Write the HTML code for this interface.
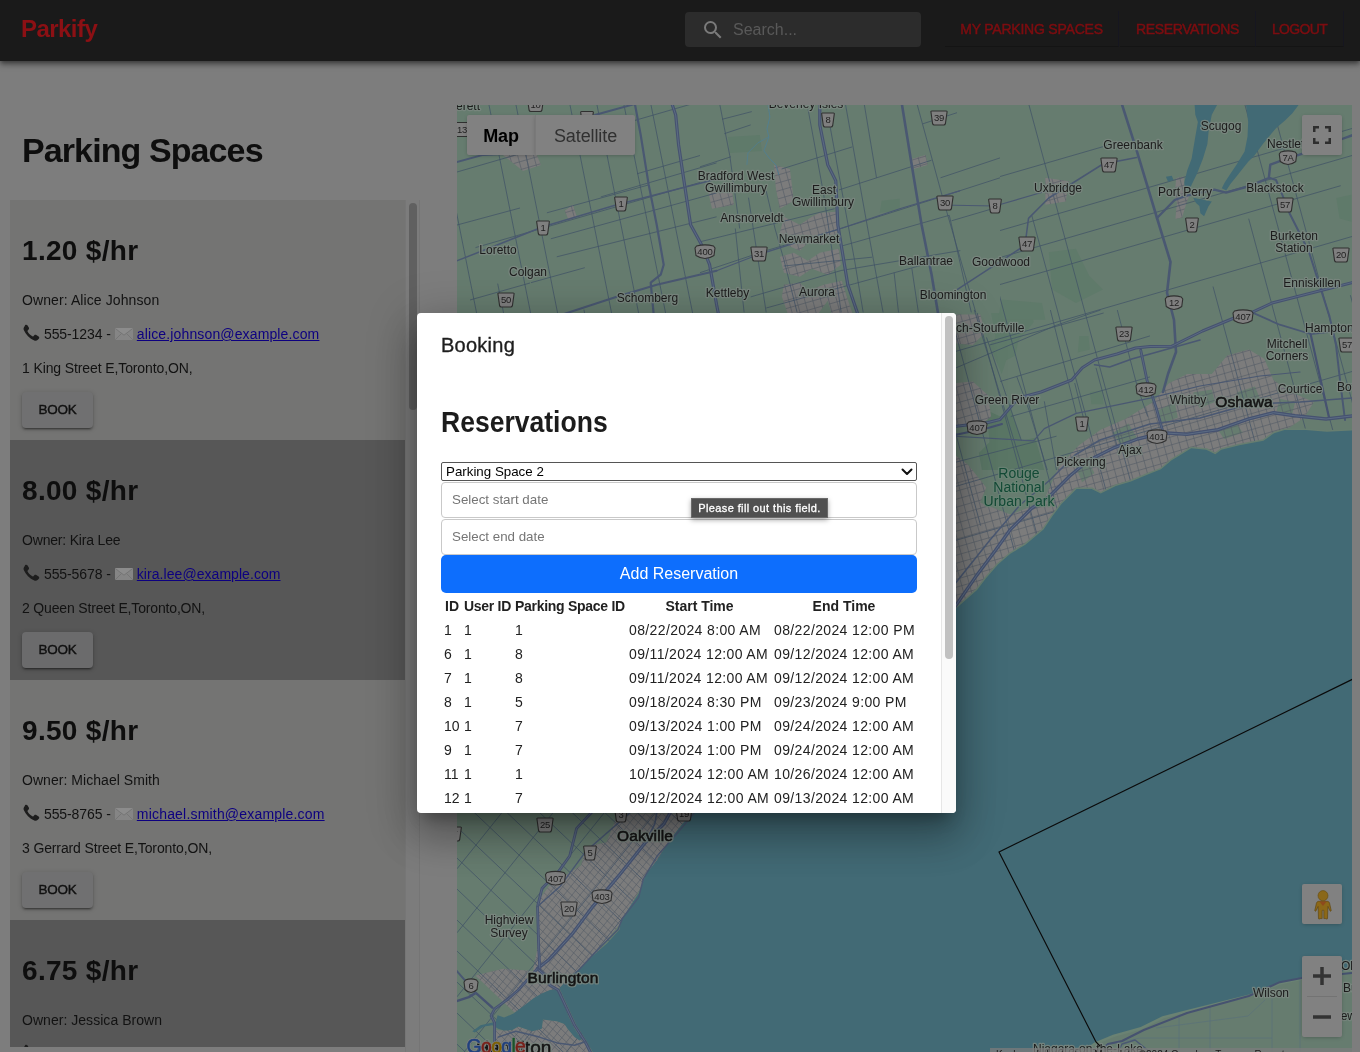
<!DOCTYPE html>
<html lang="en">
<head>
<meta charset="utf-8">
<title>Parkify</title>
<style>
*{box-sizing:border-box}
html,body{margin:0;padding:0}
body{width:1360px;height:1052px;overflow:hidden;position:relative;background:#7d7d7d;font-family:"Liberation Sans",sans-serif;color:#0f0f0f}
#wrap{position:absolute;left:0;top:0;width:1360px;height:1052px;will-change:transform;overflow:hidden}
/* ---------- header ---------- */
#hdr{position:absolute;left:0;top:0;width:1360px;height:61px;background:#1a1a1a;box-shadow:0 2px 4px -1px rgba(0,0,0,.35),0 4px 5px 0 rgba(0,0,0,.25),0 1px 10px 0 rgba(0,0,0,.2);z-index:5}
#logo{position:absolute;left:21px;top:15px;font-size:24px;line-height:28px;font-weight:bold;color:#8c1014;letter-spacing:-.55px}
#search{position:absolute;left:685px;top:12px;width:236px;height:35px;border-radius:4px;background:#2c2c2c}
#search span{position:absolute;left:48px;top:8px;font-size:16px;line-height:20px;color:#595959}
#search svg{position:absolute;left:16px;top:5.500px}
.nav{position:absolute;top:11px;height:36px;font-size:14px;font-weight:normal;-webkit-text-stroke:.45px #7d0d10;color:#7d0d10;line-height:36px;text-align:center;border-bottom:1px solid #141414;border-right:1px solid #161620}
/* ---------- left list ---------- */
#title{position:absolute;left:22px;top:130px;font-size:34px;line-height:40px;font-weight:bold;color:#0e0e0e;letter-spacing:-.9px;white-space:nowrap}
.card{position:absolute;left:10px;width:395px;height:240px}
.card.a{background:#747473}
.card.b{background:#575757}
.card h2{position:absolute;left:12px;top:35px;margin:0;font-size:28px;line-height:32px;font-weight:bold;color:#0e0e0e;letter-spacing:0;white-space:nowrap}
.card p{position:absolute;left:12px;margin:0;font-size:14px;line-height:18px;color:#121212;white-space:nowrap;letter-spacing:0}
.card .o{top:91px}
.card .c{top:125px}
.card .ad{top:159px}
.card a{color:#0d0080;text-decoration:underline}
.card .bk{position:absolute;left:12px;top:192px;width:71px;height:36px;border-radius:4px;font-size:13.500px;font-weight:normal;letter-spacing:-.2px;line-height:36px;text-align:center;color:#111;-webkit-text-stroke:.4px #111;box-shadow:0 3px 1px -2px rgba(0,0,0,.25),0 2px 2px 0 rgba(0,0,0,.2),0 1px 5px 0 rgba(0,0,0,.18)}
.card.a .bk{background:#707071}
.card.b .bk{background:#6b6b6c}
#sbtrack{position:absolute;left:405px;top:200px;width:15px;height:852px;background:#7c7c7c;border-left:1px solid #767676;border-right:1px solid #757575}
#sbthumb{position:absolute;left:409px;top:203px;width:8px;height:207px;border-radius:4px;background:#606060}
#list{position:absolute;left:0;top:200px;width:420px;height:847px;overflow:hidden}
#list .card{left:10px}
.card .ph{position:absolute;left:0;top:-1px}
.card .t1{margin-left:22px;letter-spacing:-.1px}
.card .ml{display:inline-block;vertical-align:-1px;margin-left:.3px;margin-right:4px}
/* ---------- map ---------- */
#map{position:absolute;left:457px;top:105px;width:895px;height:947px;overflow:hidden;background:#667c6f}
.gc{position:absolute;background:#818181;box-shadow:0 1px 4px -1px rgba(0,0,0,.3)}
#glogo{position:absolute;left:9.500px;top:929px;font-size:19.500px;line-height:24px;letter-spacing:-.7px;white-space:nowrap;-webkit-text-stroke:2.200px #7c7f7e;paint-order:stroke fill}
#glogo2{position:absolute;left:9.500px;top:929px;font-size:19.500px;line-height:24px;letter-spacing:-.7px;white-space:nowrap;-webkit-text-stroke:.5px currentColor}
#attr{position:absolute;left:533px;top:943px;height:14px;width:362px;background:rgba(124,124,124,.75);font-size:10px;line-height:14px;color:#1a1a1a;white-space:nowrap}
#attr span{display:inline-block;padding:0 6px}
/* ---------- modal ---------- */
#modal{position:absolute;left:417px;top:313px;width:539px;height:500px;border-radius:4px;background:#fff;box-shadow:0 11px 15px -7px rgba(0,0,0,.3),0 24px 38px 3px rgba(0,0,0,.2),0 9px 46px 8px rgba(0,0,0,.18);z-index:10;overflow:hidden;color:#212121}
#mtitle{position:absolute;left:24px;top:18px;font-size:20px;line-height:28px;color:#1e1e1e;letter-spacing:.25px;-webkit-text-stroke:.35px #1e1e1e;white-space:nowrap}
#mh{position:absolute;left:24px;top:91px;font-size:29px;line-height:36px;font-weight:bold;color:#1c1c1c;white-space:nowrap;transform-origin:0 50%;transform:scaleX(.915)}
#sel{position:absolute;left:24px;top:149px;width:476px;height:19px;border:1px solid #555;border-radius:2px;background:#fff;font-size:13.333px;line-height:17px;color:#000}
#sel span{position:absolute;left:4px;top:0}
#sel svg{position:absolute;right:3px;top:5px}
.inp{position:absolute;left:24px;width:476px;height:36px;border:1px solid #c9c9c9;border-radius:4px;background:#fff}
.inp span{position:absolute;left:10px;top:9px;font-size:13.333px;line-height:16px;color:#757575;white-space:nowrap}
#addbtn{position:absolute;left:24px;top:242px;width:476px;height:38px;border-radius:5px;background:#0d6efd;color:#fff;font-size:16px;line-height:37px;text-align:center}
#tip{position:absolute;left:274px;top:185px;width:137px;height:20px;background:#505050;border:1px solid #6a6a6a;color:#fff;font-size:11px;line-height:18px;text-align:center;white-space:nowrap;box-shadow:0 2px 5px rgba(0,0,0,.35);-webkit-text-stroke:.3px #fff;letter-spacing:.4px}
#tbl{position:absolute;left:24px;top:281px;width:476px;font-size:14px;color:#212121}
.tr{position:absolute;left:0;width:476px;height:24px;line-height:24px;white-space:nowrap}
.tr span{position:absolute;top:0}
.tr .c1{left:3px}.tr .c2{left:23px}.tr .c3{left:74px}.tr .c4{left:188px;letter-spacing:.37px}.tr .c5{left:333px;letter-spacing:.37px}
.th{font-weight:bold}
.th .c1{left:4px}.th .c2,.th .c3{letter-spacing:-.28px}
.th .c4{left:187px;width:143px;text-align:center;letter-spacing:0}
.th .c5{left:332px;width:142px;text-align:center;letter-spacing:0}
#msb{position:absolute;left:524px;top:0;width:15px;height:500px;background:#fafafa;border-left:1px solid #e6e6e6}
#msbt{position:absolute;left:528px;top:3px;width:8px;height:343px;border-radius:4px;background:#c1c1c1}
</style>
</head>
<body>
<div id="wrap">
<div id="hdr">
  <div id="logo">Parkify</div>
  <div id="search"><svg width="24" height="24" viewBox="0 0 24 24"><path fill="#7a7a7a" d="M15.5 14h-.79l-.28-.27A6.47 6.47 0 0 0 16 9.5 6.5 6.5 0 1 0 9.5 16c1.61 0 3.09-.59 4.23-1.57l.27.28v.79l5 4.99L20.49 19zm-6 0C7.01 14 5 11.99 5 9.500S7.01 5 9.500 5 14 7.010 14 9.500 11.990 14 9.500 14"/></svg><span>Search...</span></div>
  <div class="nav" style="left:945px;width:174px;letter-spacing:-.22px">MY PARKING SPACES</div>
  <div class="nav" style="left:1120px;width:136px;letter-spacing:-.36px">RESERVATIONS</div>
  <div class="nav" style="left:1256px;width:88px;letter-spacing:-.68px">LOGOUT</div>
</div>
<div id="title">Parking Spaces</div>
<div id="list">
<div class="card a" style="top:0px"><h2 style="letter-spacing:0.307px">1.20 $/hr</h2><p class="o" style="letter-spacing:0.095px">Owner: Alice Johnson</p><p class="c"><svg class="ph" width="18" height="18" viewBox="0 0 18 18"><path fill="#1d1d1d" d="M3.2 1.1c.7-.7 1.700-.6 2.200.2l1.400 2.300c.4.700.3 1.500-.2 2L5.700 6.500c-.3.300-.3.700-.1 1.100.5 1 1.200 1.900 2 2.700.8.800 1.700 1.500 2.700 2 .4.200.800.2 1.100-.1l.9-.9c.5-.5 1.300-.6 2-.2l2.300 1.400c.8.500.9 1.500.2 2.200l-1 1c-.9.900-2.300 1.200-3.500.7-2.400-1-4.500-2.400-6.300-4.200C4.200 10.400 2.800 8.300 1.800 5.900c-.5-1.200-.2-2.600.7-3.500z"/></svg><span class="t1">555-1234 - </span><svg class="ml" width="18" height="12" viewBox="0 0 18 12"><rect x="0" y="0" width="18" height="12" rx=".8" fill="#858585"/><path d="M0 .3L9 7 18 .3V0H0z" fill="#8c8c8c"/><path d="M.3 .5L9 7.200 17.700 .5M.3 11.700L6.600 5.400M17.700 11.700L11.400 5.400" fill="none" stroke="#747474" stroke-width=".9"/></svg><a style="letter-spacing:0.136px">alice.johnson@example.com</a></p><p class="ad" style="letter-spacing:-0.112px">1 King Street E,Toronto,ON,</p><div class="bk">BOOK</div></div>
<div class="card b" style="top:240px"><h2 style="letter-spacing:0.307px">8.00 $/hr</h2><p class="o" style="letter-spacing:-0.185px">Owner: Kira Lee</p><p class="c"><svg class="ph" width="18" height="18" viewBox="0 0 18 18"><path fill="#1d1d1d" d="M3.2 1.1c.7-.7 1.700-.6 2.200.2l1.400 2.300c.4.700.3 1.500-.2 2L5.700 6.500c-.3.300-.3.700-.1 1.100.5 1 1.200 1.900 2 2.700.8.800 1.700 1.500 2.700 2 .4.200.800.2 1.100-.1l.9-.9c.5-.5 1.300-.6 2-.2l2.300 1.400c.8.500.9 1.500.2 2.200l-1 1c-.9.900-2.300 1.200-3.500.7-2.400-1-4.500-2.400-6.300-4.200C4.200 10.400 2.800 8.300 1.800 5.900c-.5-1.200-.2-2.600.7-3.500z"/></svg><span class="t1">555-5678 - </span><svg class="ml" width="18" height="12" viewBox="0 0 18 12"><rect x="0" y="0" width="18" height="12" rx=".8" fill="#858585"/><path d="M0 .3L9 7 18 .3V0H0z" fill="#8c8c8c"/><path d="M.3 .5L9 7.200 17.700 .5M.3 11.700L6.600 5.400M17.700 11.700L11.400 5.400" fill="none" stroke="#747474" stroke-width=".9"/></svg><a style="letter-spacing:0.055px">kira.lee@example.com</a></p><p class="ad" style="letter-spacing:-0.162px">2 Queen Street E,Toronto,ON,</p><div class="bk">BOOK</div></div>
<div class="card a" style="top:480px"><h2 style="letter-spacing:0.307px">9.50 $/hr</h2><p class="o" style="letter-spacing:0.048px">Owner: Michael Smith</p><p class="c"><svg class="ph" width="18" height="18" viewBox="0 0 18 18"><path fill="#1d1d1d" d="M3.2 1.1c.7-.7 1.700-.6 2.200.2l1.400 2.300c.4.700.3 1.500-.2 2L5.700 6.500c-.3.300-.3.700-.1 1.100.5 1 1.200 1.900 2 2.700.8.800 1.700 1.500 2.700 2 .4.200.800.2 1.100-.1l.9-.9c.5-.5 1.300-.6 2-.2l2.300 1.400c.8.500.9 1.500.2 2.200l-1 1c-.9.900-2.300 1.200-3.500.7-2.400-1-4.500-2.400-6.300-4.200C4.200 10.400 2.800 8.300 1.800 5.900c-.5-1.200-.2-2.600.7-3.500z"/></svg><span class="t1">555-8765 - </span><svg class="ml" width="18" height="12" viewBox="0 0 18 12"><rect x="0" y="0" width="18" height="12" rx=".8" fill="#858585"/><path d="M0 .3L9 7 18 .3V0H0z" fill="#8c8c8c"/><path d="M.3 .5L9 7.200 17.700 .5M.3 11.700L6.600 5.400M17.700 11.700L11.400 5.400" fill="none" stroke="#747474" stroke-width=".9"/></svg><a style="letter-spacing:0.19px">michael.smith@example.com</a></p><p class="ad" style="letter-spacing:-0.128px">3 Gerrard Street E,Toronto,ON,</p><div class="bk">BOOK</div></div>
<div class="card b" style="top:720px"><h2 style="letter-spacing:0.307px">6.75 $/hr</h2><p class="o" style="letter-spacing:0.036px">Owner: Jessica Brown</p><p class="c"><svg class="ph" width="18" height="18" viewBox="0 0 18 18"><path fill="#1d1d1d" d="M3.2 1.1c.7-.7 1.700-.6 2.200.2l1.400 2.300c.4.700.3 1.500-.2 2L5.700 6.500c-.3.300-.3.700-.1 1.100.5 1 1.200 1.900 2 2.700.8.800 1.700 1.500 2.700 2 .4.200.800.2 1.100-.1l.9-.9c.5-.5 1.300-.6 2-.2l2.300 1.400c.8.500.9 1.500.2 2.200l-1 1c-.9.900-2.300 1.200-3.500.7-2.400-1-4.500-2.400-6.300-4.200C4.200 10.400 2.800 8.300 1.800 5.900c-.5-1.200-.2-2.600.7-3.500z"/></svg><span class="t1">555-4321 - </span><svg class="ml" width="18" height="12" viewBox="0 0 18 12"><rect x="0" y="0" width="18" height="12" rx=".8" fill="#858585"/><path d="M0 .3L9 7 18 .3V0H0z" fill="#8c8c8c"/><path d="M.3 .5L9 7.200 17.700 .5M.3 11.700L6.600 5.400M17.700 11.700L11.400 5.400" fill="none" stroke="#747474" stroke-width=".9"/></svg><a style="letter-spacing:0.13px">jessica.brown@example.com</a></p><p class="ad" style="letter-spacing:-0.13px">4 Dundas Street E,Toronto,ON,</p><div class="bk">BOOK</div></div>
</div>
<div id="sbtrack"></div><div id="sbthumb"></div>
<div id="map"><!--MAP--><svg id="msvg" width="895" height="947" viewBox="457 105 895 947" style="position:absolute;left:0;top:0">
<defs>
<clipPath id="cA"><path clip-rule="evenodd" d="M457,105H1352V640H457Z M700,105H1000V313H700Z"/></clipPath>
<clipPath id="cB"><polygon points="457,800 760,800 760,1052 457,1052"/></clipPath>
<clipPath id="cU"><polygon points="1045.0,497.7 1058.9,466.8 1079.0,445.2 1100.6,429.7 1125.3,418.9 1153.1,401.9 1168.5,383.4 1187.1,374.1 1211.8,374.1 1227.2,355.6 1248.8,349.4 1264.3,358.7 1273.5,380.3 1292.1,392.6 1313.7,401.9 1304.4,417.4 1285.9,429.7 1279.7,454.4 1187.1,485.3 1094.4,516.2 1051.2,516.2"/><polygon points="956.1,383.0 972.8,381.5 988.0,395.2 991.1,416.5 980.4,425.6 956.1,427.1"/><polygon points="956.1,314.6 980.4,314.6 985.0,332.8 972.8,345.0 956.1,343.5"/><polygon points="950.0,451.3 968.1,464.8 986.2,487.4 980.1,502.5 1010.3,514.6 1049.5,499.5 1076.6,484.4 1094.7,490.4 1070.6,520.6 1040.4,550.7 998.2,586.9 956.0,629.1 950.0,629.1"/><polygon points="783.9,216.8 799.8,224.8 811.8,216.8 819.8,212.8 835.8,211.8 837.8,232.8 823.8,244.8 807.8,242.8 799.8,250.8 785.9,244.8 779.9,232.8"/><polygon points="779.9,256.8 793.8,252.8 807.8,260.8 819.8,252.8 838.8,248.8 840.8,264.7 827.8,274.7 811.8,268.7 799.8,276.7 783.9,272.7"/><polygon points="783.9,284.7 799.8,282.7 807.8,290.7 823.8,284.7 841.8,280.7 846.8,296.7 852.8,314.3 831.8,314.3 827.8,300.7 817.8,314.3 787.9,314.3 781.9,296.7"/><polygon points="708.0,190.9 731.9,188.9 733.9,204.8 712.0,208.8"/><polygon points="773.9,164.9 789.9,168.9 793.8,200.8 779.9,208.8 775.9,188.9"/><polygon points="911.7,158.9 925.6,154.9 927.6,164.9 913.7,168.9"/><polygon points="502.9,154.9 536.9,154.9 540.9,164.9 522.9,170.9"/><polygon points="564.8,210.8 572.8,204.8 576.8,216.8 568.8,220.8"/><polygon points="1045.4,177.8 1069.1,181.2 1065.7,201.5 1045.4,204.8"/><polygon points="1176.2,177.9 1183.5,176.5 1185.0,188.2 1189.4,195.6 1186.5,202.9 1182.1,217.6 1175.4,219.1 1176.9,202.9 1174.7,194.1"/></clipPath><clipPath id="cU2"><polygon points="618.0,813.5 697.4,813.5 673.2,839.9 647.9,874.4 622.6,920.4 595.0,954.9 560.5,987.1 514.5,1012.4 475.4,975.6 503.0,968.7 532.9,971.0 537.5,948.0 537.5,902.0 549.0,885.9 581.2,865.2 585.8,846.8 606.5,842.2"/><polygon points="495.8,1030.0 504.1,1030.6 512.3,1030.0 518.2,1026.5 532.3,1031.2 541.7,1028.8 542.9,1019.4 557.0,1021.2 564.6,1024.1 567.6,1028.8 574.6,1037.1 581.7,1039.4 587.6,1045.3 592.3,1053.5 492.3,1053.5 493.5,1039.4"/></clipPath></defs>
<rect x="457" y="105" width="895" height="947" fill="#667c6f"/>
<polygon points="980.4,407.3 1000.2,416.5 1010.8,408.9 1021.5,440.8 1035.2,437.8 1044.3,470.0 981.9,470.0 978.9,453.0 989.5,442.3 988.0,425.6" fill="#5a7665" />
<polygon points="991.1,313.0 1032.1,313.0 1033.7,322.2 1018.4,340.4 1015.4,355.6 1006.3,360.2 1001.7,373.9 989.5,345.0 995.6,337.4" fill="#5f7a6a" />
<polygon points="1079.3,335.9 1088.4,335.9 1089.9,349.5 1077.8,352.6" fill="#5f7a6a" />
<polygon points="1089.9,392.1 1102.1,390.6 1103.6,404.3 1091.4,404.3" fill="#5f7a6a" />
<polygon points="1048.8,252.2 1075.9,248.8 1089.4,275.9 1102.9,289.4 1075.9,302.9 1052.2,289.4" fill="#5f7a6a" />
<polygon points="1001.5,299.5 1042.0,302.9 1045.4,319.8 998.1,319.8" fill="#5f7a6a" />
<polygon points="1336.3,198.1 1351.5,194.7 1351.5,221.7 1339.6,218.4" fill="#5f7a6a" />
<polygon points="728.0,136.9 759.9,135.0 761.9,150.9 730.0,152.9" fill="#5f7a6a" />
<polygon points="881.7,200.8 899.7,198.8 899.7,210.8 879.7,212.8" fill="#5f7a6a" />
<polygon points="1045.0,497.7 1058.9,466.8 1079.0,445.2 1100.6,429.7 1125.3,418.9 1153.1,401.9 1168.5,383.4 1187.1,374.1 1211.8,374.1 1227.2,355.6 1248.8,349.4 1264.3,358.7 1273.5,380.3 1292.1,392.6 1313.7,401.9 1304.4,417.4 1285.9,429.7 1279.7,454.4 1187.1,485.3 1094.4,516.2 1051.2,516.2" fill="#7c7c7c" />
<polygon points="1112.9,432.8 1128.4,423.5 1137.7,439.0 1122.2,448.2" fill="#667c6f"/>
<polygon points="1156.2,411.2 1174.7,401.9 1177.8,417.4 1162.4,423.5" fill="#667c6f"/>
<polygon points="1193.2,392.6 1211.8,389.6 1214.9,401.9 1199.4,408.1" fill="#667c6f"/>
<polygon points="1236.5,392.6 1255.0,386.5 1261.2,401.9 1245.7,408.1" fill="#667c6f"/>
<polygon points="1279.7,398.8 1295.2,401.9 1292.1,414.3 1276.6,411.2" fill="#667c6f"/>
<polygon points="1075.9,466.8 1088.2,460.6 1094.4,472.9 1082.1,482.2" fill="#667c6f"/>
<polygon points="1217.9,429.7 1236.5,423.5 1242.7,432.8 1224.1,439.0" fill="#667c6f"/>
<polygon points="956.1,383.0 972.8,381.5 988.0,395.2 991.1,416.5 980.4,425.6 956.1,427.1" fill="#7c7c7c" />
<polygon points="956.1,314.6 980.4,314.6 985.0,332.8 972.8,345.0 956.1,343.5" fill="#7c7c7c" />
<polygon points="950.0,451.3 968.1,464.8 986.2,487.4 980.1,502.5 1010.3,514.6 1049.5,499.5 1076.6,484.4 1094.7,490.4 1070.6,520.6 1040.4,550.7 998.2,586.9 956.0,629.1 950.0,629.1" fill="#7c7c7c" />
<polygon points="783.9,216.8 799.8,224.8 811.8,216.8 819.8,212.8 835.8,211.8 837.8,232.8 823.8,244.8 807.8,242.8 799.8,250.8 785.9,244.8 779.9,232.8" fill="#7c7c7c" />
<polygon points="779.9,256.8 793.8,252.8 807.8,260.8 819.8,252.8 838.8,248.8 840.8,264.7 827.8,274.7 811.8,268.7 799.8,276.7 783.9,272.7" fill="#7c7c7c" />
<polygon points="783.9,284.7 799.8,282.7 807.8,290.7 823.8,284.7 841.8,280.7 846.8,296.7 852.8,314.3 831.8,314.3 827.8,300.7 817.8,314.3 787.9,314.3 781.9,296.7" fill="#7c7c7c" />
<polygon points="708.0,190.9 731.9,188.9 733.9,204.8 712.0,208.8" fill="#7c7c7c" />
<polygon points="773.9,164.9 789.9,168.9 793.8,200.8 779.9,208.8 775.9,188.9" fill="#7c7c7c" />
<polygon points="911.7,158.9 925.6,154.9 927.6,164.9 913.7,168.9" fill="#7c7c7c" />
<polygon points="502.9,154.9 536.9,154.9 540.9,164.9 522.9,170.9" fill="#7c7c7c" />
<polygon points="564.8,210.8 572.8,204.8 576.8,216.8 568.8,220.8" fill="#7c7c7c" />
<polygon points="1045.4,177.8 1069.1,181.2 1065.7,201.5 1045.4,204.8" fill="#7c7c7c" />
<polygon points="1176.2,177.9 1183.5,176.5 1185.0,188.2 1189.4,195.6 1186.5,202.9 1182.1,217.6 1175.4,219.1 1176.9,202.9 1174.7,194.1" fill="#7c7c7c" />
<polygon points="618.0,813.5 697.4,813.5 673.2,839.9 647.9,874.4 622.6,920.4 595.0,954.9 560.5,987.1 514.5,1012.4 475.4,975.6 503.0,968.7 532.9,971.0 537.5,948.0 537.5,902.0 549.0,885.9 581.2,865.2 585.8,846.8 606.5,842.2" fill="#7c7c7c" />
<polygon points="495.8,1030.0 504.1,1030.6 512.3,1030.0 518.2,1026.5 532.3,1031.2 541.7,1028.8 542.9,1019.4 557.0,1021.2 564.6,1024.1 567.6,1028.8 574.6,1037.1 581.7,1039.4 587.6,1045.3 592.3,1053.5 492.3,1053.5 493.5,1039.4" fill="#7c7c7c" />
<g clip-path="url(#cA)" stroke="#405266" stroke-width="1" stroke-opacity=".72"><line x1="457.0" y1="172.0" x2="1352.0" y2="-87.5"/><line x1="637.0" y1="173.8" x2="889.3" y2="100.6"/><line x1="475.5" y1="247.6" x2="982.3" y2="100.7"/><line x1="864.0" y1="216.0" x2="1120.5" y2="141.6"/><line x1="457.0" y1="388.0" x2="1352.0" y2="128.5"/><line x1="457.0" y1="415.0" x2="1352.0" y2="155.5"/><line x1="652.3" y1="385.4" x2="1340.7" y2="185.7"/><line x1="457.0" y1="496.0" x2="1352.0" y2="236.5"/><line x1="457.0" y1="631.0" x2="1352.0" y2="371.5"/><line x1="771.5" y1="593.8" x2="1128.1" y2="490.4"/><line x1="487.9" y1="703.0" x2="749.8" y2="627.1"/><line x1="457.0" y1="766.0" x2="1352.0" y2="506.5"/><line x1="611.6" y1="748.2" x2="1137.9" y2="595.5"/><line x1="604.6" y1="777.2" x2="1244.3" y2="591.7"/><line x1="457.0" y1="847.0" x2="1352.0" y2="587.5"/><line x1="715.5" y1="826.0" x2="1300.5" y2="656.4"/><line x1="457.0" y1="928.0" x2="1352.0" y2="668.5"/><line x1="457.0" y1="982.0" x2="1352.0" y2="722.5"/><line x1="373.6" y1="338.2" x2="407.3" y2="506.6"/><line x1="356.4" y1="117.1" x2="438.9" y2="529.7"/><line x1="381.0" y1="105.0" x2="493.0" y2="665.0"/><line x1="461.9" y1="374.6" x2="499.4" y2="561.8"/><line x1="435.0" y1="105.0" x2="547.0" y2="665.0"/><line x1="497.7" y1="283.6" x2="547.7" y2="533.7"/><line x1="489.0" y1="105.0" x2="601.0" y2="665.0"/><line x1="516.0" y1="105.0" x2="628.0" y2="665.0"/><line x1="583.9" y1="309.6" x2="614.5" y2="462.6"/><line x1="570.0" y1="105.0" x2="682.0" y2="665.0"/><line x1="597.0" y1="105.0" x2="709.0" y2="665.0"/><line x1="624.0" y1="105.0" x2="736.0" y2="665.0"/><line x1="651.0" y1="105.0" x2="763.0" y2="665.0"/><line x1="746.2" y1="310.9" x2="775.2" y2="455.8"/><line x1="742.4" y1="156.8" x2="779.0" y2="339.9"/><line x1="786.0" y1="105.0" x2="898.0" y2="665.0"/><line x1="939.5" y1="373.4" x2="980.6" y2="525.6"/><line x1="939.7" y1="274.2" x2="1037.3" y2="635.8"/><line x1="921.0" y1="105.0" x2="1072.2" y2="665.0"/><line x1="948.0" y1="105.0" x2="1099.2" y2="665.0"/><line x1="1031.8" y1="215.5" x2="1143.5" y2="629.2"/><line x1="1029.0" y1="105.0" x2="1180.2" y2="665.0"/><line x1="1213.0" y1="286.5" x2="1267.7" y2="489.1"/><line x1="1248.7" y1="218.7" x2="1333.3" y2="532.2"/><line x1="1245.0" y1="105.0" x2="1396.2" y2="665.0"/><line x1="1272.0" y1="105.0" x2="1423.2" y2="665.0"/><line x1="1350.4" y1="295.2" x2="1430.1" y2="590.6"/></g>
<g clip-path="url(#cB)" stroke="#405266" stroke-width="1" stroke-opacity=".72"><line x1="457.0" y1="114.1" x2="760.0" y2="402.0"/><line x1="457.0" y1="145.1" x2="760.0" y2="433.0"/><line x1="457.0" y1="176.1" x2="760.0" y2="464.0"/><line x1="457.0" y1="207.1" x2="760.0" y2="495.0"/><line x1="457.0" y1="238.1" x2="760.0" y2="526.0"/><line x1="457.0" y1="269.1" x2="760.0" y2="557.0"/><line x1="457.0" y1="300.1" x2="760.0" y2="588.0"/><line x1="457.0" y1="331.1" x2="760.0" y2="619.0"/><line x1="457.0" y1="362.1" x2="760.0" y2="650.0"/><line x1="457.0" y1="393.1" x2="760.0" y2="681.0"/><line x1="457.0" y1="424.1" x2="760.0" y2="712.0"/><line x1="457.0" y1="455.1" x2="760.0" y2="743.0"/><line x1="457.0" y1="486.1" x2="760.0" y2="774.0"/><line x1="457.0" y1="517.1" x2="760.0" y2="805.0"/><line x1="457.0" y1="548.1" x2="760.0" y2="836.0"/><line x1="457.0" y1="579.1" x2="760.0" y2="867.0"/><line x1="457.0" y1="610.1" x2="760.0" y2="898.0"/><line x1="457.0" y1="641.1" x2="760.0" y2="929.0"/><line x1="457.0" y1="672.1" x2="760.0" y2="960.0"/><line x1="457.0" y1="703.1" x2="760.0" y2="991.0"/><line x1="457.0" y1="734.1" x2="760.0" y2="1022.0"/><line x1="457.0" y1="765.1" x2="760.0" y2="1053.0"/><line x1="457.0" y1="796.1" x2="760.0" y2="1084.0"/><line x1="457.0" y1="827.1" x2="760.0" y2="1115.0"/><line x1="457.0" y1="858.1" x2="760.0" y2="1146.0"/><line x1="457.0" y1="889.1" x2="760.0" y2="1177.0"/><line x1="457.0" y1="920.1" x2="760.0" y2="1208.0"/><line x1="457.0" y1="951.1" x2="760.0" y2="1239.0"/><line x1="457.0" y1="982.1" x2="760.0" y2="1270.0"/><line x1="457.0" y1="1013.1" x2="760.0" y2="1301.0"/><line x1="457.0" y1="1044.2" x2="760.0" y2="1332.0"/><line x1="457.0" y1="1075.2" x2="760.0" y2="1363.0"/><line x1="457.0" y1="1106.2" x2="760.0" y2="1394.0"/><line x1="457.0" y1="1137.2" x2="760.0" y2="1425.0"/><line x1="457.0" y1="1168.2" x2="760.0" y2="1456.0"/><line x1="457.0" y1="1199.2" x2="760.0" y2="1487.0"/><line x1="457.0" y1="1230.2" x2="760.0" y2="1518.0"/><line x1="457.0" y1="1261.2" x2="760.0" y2="1549.0"/><line x1="457.0" y1="1292.2" x2="760.0" y2="1580.0"/><line x1="457.0" y1="1323.2" x2="760.0" y2="1611.0"/><line x1="457.0" y1="1354.2" x2="760.0" y2="1642.0"/><line x1="457.0" y1="1385.2" x2="760.0" y2="1673.0"/><line x1="457.0" y1="1416.2" x2="760.0" y2="1704.0"/><line x1="457.0" y1="1447.2" x2="760.0" y2="1735.0"/><line x1="457.0" y1="1478.2" x2="760.0" y2="1766.0"/><line x1="457.0" y1="1509.2" x2="760.0" y2="1797.0"/><line x1="457.0" y1="1540.2" x2="760.0" y2="1828.0"/><line x1="457.0" y1="1571.2" x2="760.0" y2="1859.0"/><line x1="457.0" y1="1602.2" x2="760.0" y2="1890.0"/><line x1="457.0" y1="740.8" x2="760.0" y2="362.0"/><line x1="457.0" y1="804.8" x2="760.0" y2="426.0"/><line x1="457.0" y1="868.8" x2="760.0" y2="490.0"/><line x1="457.0" y1="932.8" x2="760.0" y2="554.0"/><line x1="457.0" y1="996.8" x2="760.0" y2="618.0"/><line x1="457.0" y1="1060.8" x2="760.0" y2="682.0"/><line x1="457.0" y1="1124.8" x2="760.0" y2="746.0"/><line x1="457.0" y1="1188.8" x2="760.0" y2="810.0"/><line x1="457.0" y1="1252.8" x2="760.0" y2="874.0"/><line x1="457.0" y1="1316.8" x2="760.0" y2="938.0"/><line x1="457.0" y1="1380.8" x2="760.0" y2="1002.0"/><line x1="457.0" y1="1444.8" x2="760.0" y2="1066.0"/><line x1="457.0" y1="1508.8" x2="760.0" y2="1130.0"/><line x1="457.0" y1="1572.8" x2="760.0" y2="1194.0"/><line x1="457.0" y1="1636.8" x2="760.0" y2="1258.0"/><line x1="457.0" y1="1700.8" x2="760.0" y2="1322.0"/><line x1="457.0" y1="1764.8" x2="760.0" y2="1386.0"/><line x1="457.0" y1="1828.8" x2="760.0" y2="1450.0"/></g>
<g clip-path="url(#cU)" stroke="#565d68" stroke-width="1" stroke-opacity=".62"><line x1="457" y1="100.0" x2="1352" y2="-159.5"/><line x1="457" y1="108.0" x2="1352" y2="-151.5"/><line x1="457" y1="116.0" x2="1352" y2="-143.5"/><line x1="457" y1="124.0" x2="1352" y2="-135.5"/><line x1="457" y1="132.0" x2="1352" y2="-127.5"/><line x1="457" y1="140.0" x2="1352" y2="-119.5"/><line x1="457" y1="148.0" x2="1352" y2="-111.5"/><line x1="457" y1="156.0" x2="1352" y2="-103.5"/><line x1="457" y1="164.0" x2="1352" y2="-95.5"/><line x1="457" y1="172.0" x2="1352" y2="-87.5"/><line x1="457" y1="180.0" x2="1352" y2="-79.5"/><line x1="457" y1="188.0" x2="1352" y2="-71.5"/><line x1="457" y1="196.0" x2="1352" y2="-63.5"/><line x1="457" y1="204.0" x2="1352" y2="-55.5"/><line x1="457" y1="212.0" x2="1352" y2="-47.5"/><line x1="457" y1="220.0" x2="1352" y2="-39.5"/><line x1="457" y1="228.0" x2="1352" y2="-31.5"/><line x1="457" y1="236.0" x2="1352" y2="-23.5"/><line x1="457" y1="244.0" x2="1352" y2="-15.5"/><line x1="457" y1="252.0" x2="1352" y2="-7.5"/><line x1="457" y1="260.0" x2="1352" y2="0.5"/><line x1="457" y1="268.0" x2="1352" y2="8.5"/><line x1="457" y1="276.0" x2="1352" y2="16.5"/><line x1="457" y1="284.0" x2="1352" y2="24.5"/><line x1="457" y1="292.0" x2="1352" y2="32.5"/><line x1="457" y1="300.0" x2="1352" y2="40.5"/><line x1="457" y1="308.0" x2="1352" y2="48.5"/><line x1="457" y1="316.0" x2="1352" y2="56.5"/><line x1="457" y1="324.0" x2="1352" y2="64.5"/><line x1="457" y1="332.0" x2="1352" y2="72.5"/><line x1="457" y1="340.0" x2="1352" y2="80.5"/><line x1="457" y1="348.0" x2="1352" y2="88.5"/><line x1="457" y1="356.0" x2="1352" y2="96.5"/><line x1="457" y1="364.0" x2="1352" y2="104.5"/><line x1="457" y1="372.0" x2="1352" y2="112.5"/><line x1="457" y1="380.0" x2="1352" y2="120.5"/><line x1="457" y1="388.0" x2="1352" y2="128.5"/><line x1="457" y1="396.0" x2="1352" y2="136.5"/><line x1="457" y1="404.0" x2="1352" y2="144.5"/><line x1="457" y1="412.0" x2="1352" y2="152.5"/><line x1="457" y1="420.0" x2="1352" y2="160.5"/><line x1="457" y1="428.0" x2="1352" y2="168.5"/><line x1="457" y1="436.0" x2="1352" y2="176.5"/><line x1="457" y1="444.0" x2="1352" y2="184.5"/><line x1="457" y1="452.0" x2="1352" y2="192.5"/><line x1="457" y1="460.0" x2="1352" y2="200.5"/><line x1="457" y1="468.0" x2="1352" y2="208.5"/><line x1="457" y1="476.0" x2="1352" y2="216.5"/><line x1="457" y1="484.0" x2="1352" y2="224.5"/><line x1="457" y1="492.0" x2="1352" y2="232.5"/><line x1="457" y1="500.0" x2="1352" y2="240.5"/><line x1="457" y1="508.0" x2="1352" y2="248.5"/><line x1="457" y1="516.0" x2="1352" y2="256.5"/><line x1="457" y1="524.0" x2="1352" y2="264.5"/><line x1="457" y1="532.0" x2="1352" y2="272.5"/><line x1="457" y1="540.0" x2="1352" y2="280.5"/><line x1="457" y1="548.0" x2="1352" y2="288.5"/><line x1="457" y1="556.0" x2="1352" y2="296.5"/><line x1="457" y1="564.0" x2="1352" y2="304.5"/><line x1="457" y1="572.0" x2="1352" y2="312.5"/><line x1="457" y1="580.0" x2="1352" y2="320.5"/><line x1="457" y1="588.0" x2="1352" y2="328.5"/><line x1="457" y1="596.0" x2="1352" y2="336.5"/><line x1="457" y1="604.0" x2="1352" y2="344.5"/><line x1="457" y1="612.0" x2="1352" y2="352.5"/><line x1="457" y1="620.0" x2="1352" y2="360.5"/><line x1="457" y1="628.0" x2="1352" y2="368.5"/><line x1="457" y1="636.0" x2="1352" y2="376.5"/><line x1="457" y1="644.0" x2="1352" y2="384.5"/><line x1="457" y1="652.0" x2="1352" y2="392.5"/><line x1="457" y1="660.0" x2="1352" y2="400.5"/><line x1="457" y1="668.0" x2="1352" y2="408.5"/><line x1="457" y1="676.0" x2="1352" y2="416.5"/><line x1="457" y1="684.0" x2="1352" y2="424.5"/><line x1="457" y1="692.0" x2="1352" y2="432.5"/><line x1="457" y1="700.0" x2="1352" y2="440.5"/><line x1="457" y1="708.0" x2="1352" y2="448.5"/><line x1="457" y1="716.0" x2="1352" y2="456.5"/><line x1="457" y1="724.0" x2="1352" y2="464.5"/><line x1="457" y1="732.0" x2="1352" y2="472.5"/><line x1="457" y1="740.0" x2="1352" y2="480.5"/><line x1="457" y1="748.0" x2="1352" y2="488.5"/><line x1="457" y1="756.0" x2="1352" y2="496.5"/><line x1="457" y1="764.0" x2="1352" y2="504.5"/><line x1="457" y1="772.0" x2="1352" y2="512.5"/><line x1="457" y1="780.0" x2="1352" y2="520.5"/><line x1="457" y1="788.0" x2="1352" y2="528.5"/><line x1="457" y1="796.0" x2="1352" y2="536.5"/><line x1="457" y1="804.0" x2="1352" y2="544.5"/><line x1="457" y1="812.0" x2="1352" y2="552.5"/><line x1="457" y1="820.0" x2="1352" y2="560.5"/><line x1="457" y1="828.0" x2="1352" y2="568.5"/><line x1="457" y1="836.0" x2="1352" y2="576.5"/><line x1="457" y1="844.0" x2="1352" y2="584.5"/><line x1="457" y1="852.0" x2="1352" y2="592.5"/><line x1="457" y1="860.0" x2="1352" y2="600.5"/><line x1="457" y1="868.0" x2="1352" y2="608.5"/><line x1="457" y1="876.0" x2="1352" y2="616.5"/><line x1="457" y1="884.0" x2="1352" y2="624.5"/><line x1="457" y1="892.0" x2="1352" y2="632.5"/><line x1="457" y1="900.0" x2="1352" y2="640.5"/><line x1="457" y1="908.0" x2="1352" y2="648.5"/><line x1="457" y1="916.0" x2="1352" y2="656.5"/><line x1="457" y1="924.0" x2="1352" y2="664.5"/><line x1="457" y1="932.0" x2="1352" y2="672.5"/><line x1="457" y1="940.0" x2="1352" y2="680.5"/><line x1="457" y1="948.0" x2="1352" y2="688.5"/><line x1="457" y1="956.0" x2="1352" y2="696.5"/><line x1="457" y1="964.0" x2="1352" y2="704.5"/><line x1="457" y1="972.0" x2="1352" y2="712.5"/><line x1="457" y1="980.0" x2="1352" y2="720.5"/><line x1="457" y1="988.0" x2="1352" y2="728.5"/><line x1="457" y1="996.0" x2="1352" y2="736.5"/><line x1="457" y1="1004.0" x2="1352" y2="744.5"/><line x1="457" y1="1012.0" x2="1352" y2="752.5"/><line x1="457" y1="1020.0" x2="1352" y2="760.5"/><line x1="457" y1="1028.0" x2="1352" y2="768.5"/><line x1="457" y1="1036.0" x2="1352" y2="776.5"/><line x1="457" y1="1044.0" x2="1352" y2="784.5"/><line x1="457" y1="1052.0" x2="1352" y2="792.5"/><line x1="457" y1="1060.0" x2="1352" y2="800.5"/><line x1="457" y1="1068.0" x2="1352" y2="808.5"/><line x1="457" y1="1076.0" x2="1352" y2="816.5"/><line x1="457" y1="1084.0" x2="1352" y2="824.5"/><line x1="457" y1="1092.0" x2="1352" y2="832.5"/><line x1="457" y1="1100.0" x2="1352" y2="840.5"/><line x1="457" y1="1108.0" x2="1352" y2="848.5"/><line x1="457" y1="1116.0" x2="1352" y2="856.5"/><line x1="457" y1="1124.0" x2="1352" y2="864.5"/><line x1="457" y1="1132.0" x2="1352" y2="872.5"/><line x1="457" y1="1140.0" x2="1352" y2="880.5"/><line x1="457" y1="1148.0" x2="1352" y2="888.5"/><line x1="457" y1="1156.0" x2="1352" y2="896.5"/><line x1="457" y1="1164.0" x2="1352" y2="904.5"/><line x1="457" y1="1172.0" x2="1352" y2="912.5"/><line x1="457" y1="1180.0" x2="1352" y2="920.5"/><line x1="457" y1="1188.0" x2="1352" y2="928.5"/><line x1="457" y1="1196.0" x2="1352" y2="936.5"/><line x1="457" y1="1204.0" x2="1352" y2="944.5"/><line x1="457" y1="1212.0" x2="1352" y2="952.5"/><line x1="457" y1="1220.0" x2="1352" y2="960.5"/><line x1="457" y1="1228.0" x2="1352" y2="968.5"/><line x1="457" y1="1236.0" x2="1352" y2="976.5"/><line x1="457" y1="1244.0" x2="1352" y2="984.5"/><line x1="457" y1="1252.0" x2="1352" y2="992.5"/><line x1="457" y1="1260.0" x2="1352" y2="1000.5"/><line x1="457" y1="1268.0" x2="1352" y2="1008.5"/><line x1="457" y1="1276.0" x2="1352" y2="1016.5"/><line x1="457" y1="1284.0" x2="1352" y2="1024.5"/><line x1="457" y1="1292.0" x2="1352" y2="1032.5"/><line x1="457" y1="1300.0" x2="1352" y2="1040.5"/><line x1="457" y1="1308.0" x2="1352" y2="1048.5"/><line x1="457" y1="1316.0" x2="1352" y2="1056.5"/><line x1="457" y1="1324.0" x2="1352" y2="1064.5"/><line x1="457" y1="1332.0" x2="1352" y2="1072.5"/><line x1="457" y1="1340.0" x2="1352" y2="1080.5"/><line x1="457" y1="1348.0" x2="1352" y2="1088.5"/><line x1="457" y1="1356.0" x2="1352" y2="1096.5"/><line x1="457" y1="1364.0" x2="1352" y2="1104.5"/><line x1="457" y1="1372.0" x2="1352" y2="1112.5"/><line x1="457" y1="1380.0" x2="1352" y2="1120.5"/><line x1="457" y1="1388.0" x2="1352" y2="1128.5"/><line x1="457" y1="1396.0" x2="1352" y2="1136.5"/><line x1="200" y1="105" x2="351.2" y2="665"/><line x1="208" y1="105" x2="359.2" y2="665"/><line x1="216" y1="105" x2="367.2" y2="665"/><line x1="224" y1="105" x2="375.2" y2="665"/><line x1="232" y1="105" x2="383.2" y2="665"/><line x1="240" y1="105" x2="391.2" y2="665"/><line x1="248" y1="105" x2="399.2" y2="665"/><line x1="256" y1="105" x2="407.2" y2="665"/><line x1="264" y1="105" x2="415.2" y2="665"/><line x1="272" y1="105" x2="423.2" y2="665"/><line x1="280" y1="105" x2="431.2" y2="665"/><line x1="288" y1="105" x2="439.2" y2="665"/><line x1="296" y1="105" x2="447.2" y2="665"/><line x1="304" y1="105" x2="455.2" y2="665"/><line x1="312" y1="105" x2="463.2" y2="665"/><line x1="320" y1="105" x2="471.2" y2="665"/><line x1="328" y1="105" x2="479.2" y2="665"/><line x1="336" y1="105" x2="487.2" y2="665"/><line x1="344" y1="105" x2="495.2" y2="665"/><line x1="352" y1="105" x2="503.2" y2="665"/><line x1="360" y1="105" x2="511.2" y2="665"/><line x1="368" y1="105" x2="519.2" y2="665"/><line x1="376" y1="105" x2="527.2" y2="665"/><line x1="384" y1="105" x2="535.2" y2="665"/><line x1="392" y1="105" x2="543.2" y2="665"/><line x1="400" y1="105" x2="551.2" y2="665"/><line x1="408" y1="105" x2="559.2" y2="665"/><line x1="416" y1="105" x2="567.2" y2="665"/><line x1="424" y1="105" x2="575.2" y2="665"/><line x1="432" y1="105" x2="583.2" y2="665"/><line x1="440" y1="105" x2="591.2" y2="665"/><line x1="448" y1="105" x2="599.2" y2="665"/><line x1="456" y1="105" x2="607.2" y2="665"/><line x1="464" y1="105" x2="615.2" y2="665"/><line x1="472" y1="105" x2="623.2" y2="665"/><line x1="480" y1="105" x2="631.2" y2="665"/><line x1="488" y1="105" x2="639.2" y2="665"/><line x1="496" y1="105" x2="647.2" y2="665"/><line x1="504" y1="105" x2="655.2" y2="665"/><line x1="512" y1="105" x2="663.2" y2="665"/><line x1="520" y1="105" x2="671.2" y2="665"/><line x1="528" y1="105" x2="679.2" y2="665"/><line x1="536" y1="105" x2="687.2" y2="665"/><line x1="544" y1="105" x2="695.2" y2="665"/><line x1="552" y1="105" x2="703.2" y2="665"/><line x1="560" y1="105" x2="711.2" y2="665"/><line x1="568" y1="105" x2="719.2" y2="665"/><line x1="576" y1="105" x2="727.2" y2="665"/><line x1="584" y1="105" x2="735.2" y2="665"/><line x1="592" y1="105" x2="743.2" y2="665"/><line x1="600" y1="105" x2="751.2" y2="665"/><line x1="608" y1="105" x2="759.2" y2="665"/><line x1="616" y1="105" x2="767.2" y2="665"/><line x1="624" y1="105" x2="775.2" y2="665"/><line x1="632" y1="105" x2="783.2" y2="665"/><line x1="640" y1="105" x2="791.2" y2="665"/><line x1="648" y1="105" x2="799.2" y2="665"/><line x1="656" y1="105" x2="807.2" y2="665"/><line x1="664" y1="105" x2="815.2" y2="665"/><line x1="672" y1="105" x2="823.2" y2="665"/><line x1="680" y1="105" x2="831.2" y2="665"/><line x1="688" y1="105" x2="839.2" y2="665"/><line x1="696" y1="105" x2="847.2" y2="665"/><line x1="704" y1="105" x2="855.2" y2="665"/><line x1="712" y1="105" x2="863.2" y2="665"/><line x1="720" y1="105" x2="871.2" y2="665"/><line x1="728" y1="105" x2="879.2" y2="665"/><line x1="736" y1="105" x2="887.2" y2="665"/><line x1="744" y1="105" x2="895.2" y2="665"/><line x1="752" y1="105" x2="903.2" y2="665"/><line x1="760" y1="105" x2="911.2" y2="665"/><line x1="768" y1="105" x2="919.2" y2="665"/><line x1="776" y1="105" x2="927.2" y2="665"/><line x1="784" y1="105" x2="935.2" y2="665"/><line x1="792" y1="105" x2="943.2" y2="665"/><line x1="800" y1="105" x2="951.2" y2="665"/><line x1="808" y1="105" x2="959.2" y2="665"/><line x1="816" y1="105" x2="967.2" y2="665"/><line x1="824" y1="105" x2="975.2" y2="665"/><line x1="832" y1="105" x2="983.2" y2="665"/><line x1="840" y1="105" x2="991.2" y2="665"/><line x1="848" y1="105" x2="999.2" y2="665"/><line x1="856" y1="105" x2="1007.2" y2="665"/><line x1="864" y1="105" x2="1015.2" y2="665"/><line x1="872" y1="105" x2="1023.2" y2="665"/><line x1="880" y1="105" x2="1031.2" y2="665"/><line x1="888" y1="105" x2="1039.2" y2="665"/><line x1="896" y1="105" x2="1047.2" y2="665"/><line x1="904" y1="105" x2="1055.2" y2="665"/><line x1="912" y1="105" x2="1063.2" y2="665"/><line x1="920" y1="105" x2="1071.2" y2="665"/><line x1="928" y1="105" x2="1079.2" y2="665"/><line x1="936" y1="105" x2="1087.2" y2="665"/><line x1="944" y1="105" x2="1095.2" y2="665"/><line x1="952" y1="105" x2="1103.2" y2="665"/><line x1="960" y1="105" x2="1111.2" y2="665"/><line x1="968" y1="105" x2="1119.2" y2="665"/><line x1="976" y1="105" x2="1127.2" y2="665"/><line x1="984" y1="105" x2="1135.2" y2="665"/><line x1="992" y1="105" x2="1143.2" y2="665"/><line x1="1000" y1="105" x2="1151.2" y2="665"/><line x1="1008" y1="105" x2="1159.2" y2="665"/><line x1="1016" y1="105" x2="1167.2" y2="665"/><line x1="1024" y1="105" x2="1175.2" y2="665"/><line x1="1032" y1="105" x2="1183.2" y2="665"/><line x1="1040" y1="105" x2="1191.2" y2="665"/><line x1="1048" y1="105" x2="1199.2" y2="665"/><line x1="1056" y1="105" x2="1207.2" y2="665"/><line x1="1064" y1="105" x2="1215.2" y2="665"/><line x1="1072" y1="105" x2="1223.2" y2="665"/><line x1="1080" y1="105" x2="1231.2" y2="665"/><line x1="1088" y1="105" x2="1239.2" y2="665"/><line x1="1096" y1="105" x2="1247.2" y2="665"/><line x1="1104" y1="105" x2="1255.2" y2="665"/><line x1="1112" y1="105" x2="1263.2" y2="665"/><line x1="1120" y1="105" x2="1271.2" y2="665"/><line x1="1128" y1="105" x2="1279.2" y2="665"/><line x1="1136" y1="105" x2="1287.2" y2="665"/><line x1="1144" y1="105" x2="1295.2" y2="665"/><line x1="1152" y1="105" x2="1303.2" y2="665"/><line x1="1160" y1="105" x2="1311.2" y2="665"/><line x1="1168" y1="105" x2="1319.2" y2="665"/><line x1="1176" y1="105" x2="1327.2" y2="665"/><line x1="1184" y1="105" x2="1335.2" y2="665"/><line x1="1192" y1="105" x2="1343.2" y2="665"/><line x1="1200" y1="105" x2="1351.2" y2="665"/><line x1="1208" y1="105" x2="1359.2" y2="665"/><line x1="1216" y1="105" x2="1367.2" y2="665"/><line x1="1224" y1="105" x2="1375.2" y2="665"/><line x1="1232" y1="105" x2="1383.2" y2="665"/><line x1="1240" y1="105" x2="1391.2" y2="665"/><line x1="1248" y1="105" x2="1399.2" y2="665"/><line x1="1256" y1="105" x2="1407.2" y2="665"/><line x1="1264" y1="105" x2="1415.2" y2="665"/><line x1="1272" y1="105" x2="1423.2" y2="665"/><line x1="1280" y1="105" x2="1431.2" y2="665"/><line x1="1288" y1="105" x2="1439.2" y2="665"/><line x1="1296" y1="105" x2="1447.2" y2="665"/><line x1="1304" y1="105" x2="1455.2" y2="665"/><line x1="1312" y1="105" x2="1463.2" y2="665"/><line x1="1320" y1="105" x2="1471.2" y2="665"/><line x1="1328" y1="105" x2="1479.2" y2="665"/><line x1="1336" y1="105" x2="1487.2" y2="665"/><line x1="1344" y1="105" x2="1495.2" y2="665"/></g>
<g clip-path="url(#cU2)" stroke="#565d68" stroke-width="1" stroke-opacity=".62"><line x1="457" y1="114.1" x2="760" y2="402.0"/><line x1="457" y1="122.1" x2="760" y2="410.0"/><line x1="457" y1="130.1" x2="760" y2="418.0"/><line x1="457" y1="138.1" x2="760" y2="426.0"/><line x1="457" y1="146.1" x2="760" y2="434.0"/><line x1="457" y1="154.1" x2="760" y2="442.0"/><line x1="457" y1="162.1" x2="760" y2="450.0"/><line x1="457" y1="170.1" x2="760" y2="458.0"/><line x1="457" y1="178.1" x2="760" y2="466.0"/><line x1="457" y1="186.1" x2="760" y2="474.0"/><line x1="457" y1="194.1" x2="760" y2="482.0"/><line x1="457" y1="202.1" x2="760" y2="490.0"/><line x1="457" y1="210.1" x2="760" y2="498.0"/><line x1="457" y1="218.1" x2="760" y2="506.0"/><line x1="457" y1="226.1" x2="760" y2="514.0"/><line x1="457" y1="234.1" x2="760" y2="522.0"/><line x1="457" y1="242.1" x2="760" y2="530.0"/><line x1="457" y1="250.1" x2="760" y2="538.0"/><line x1="457" y1="258.1" x2="760" y2="546.0"/><line x1="457" y1="266.1" x2="760" y2="554.0"/><line x1="457" y1="274.1" x2="760" y2="562.0"/><line x1="457" y1="282.1" x2="760" y2="570.0"/><line x1="457" y1="290.1" x2="760" y2="578.0"/><line x1="457" y1="298.1" x2="760" y2="586.0"/><line x1="457" y1="306.1" x2="760" y2="594.0"/><line x1="457" y1="314.1" x2="760" y2="602.0"/><line x1="457" y1="322.1" x2="760" y2="610.0"/><line x1="457" y1="330.1" x2="760" y2="618.0"/><line x1="457" y1="338.1" x2="760" y2="626.0"/><line x1="457" y1="346.1" x2="760" y2="634.0"/><line x1="457" y1="354.1" x2="760" y2="642.0"/><line x1="457" y1="362.1" x2="760" y2="650.0"/><line x1="457" y1="370.1" x2="760" y2="658.0"/><line x1="457" y1="378.1" x2="760" y2="666.0"/><line x1="457" y1="386.1" x2="760" y2="674.0"/><line x1="457" y1="394.1" x2="760" y2="682.0"/><line x1="457" y1="402.1" x2="760" y2="690.0"/><line x1="457" y1="410.1" x2="760" y2="698.0"/><line x1="457" y1="418.1" x2="760" y2="706.0"/><line x1="457" y1="426.1" x2="760" y2="714.0"/><line x1="457" y1="434.1" x2="760" y2="722.0"/><line x1="457" y1="442.1" x2="760" y2="730.0"/><line x1="457" y1="450.1" x2="760" y2="738.0"/><line x1="457" y1="458.1" x2="760" y2="746.0"/><line x1="457" y1="466.1" x2="760" y2="754.0"/><line x1="457" y1="474.1" x2="760" y2="762.0"/><line x1="457" y1="482.1" x2="760" y2="770.0"/><line x1="457" y1="490.1" x2="760" y2="778.0"/><line x1="457" y1="498.1" x2="760" y2="786.0"/><line x1="457" y1="506.1" x2="760" y2="794.0"/><line x1="457" y1="514.1" x2="760" y2="802.0"/><line x1="457" y1="522.1" x2="760" y2="810.0"/><line x1="457" y1="530.1" x2="760" y2="818.0"/><line x1="457" y1="538.1" x2="760" y2="826.0"/><line x1="457" y1="546.1" x2="760" y2="834.0"/><line x1="457" y1="554.1" x2="760" y2="842.0"/><line x1="457" y1="562.1" x2="760" y2="850.0"/><line x1="457" y1="570.1" x2="760" y2="858.0"/><line x1="457" y1="578.1" x2="760" y2="866.0"/><line x1="457" y1="586.1" x2="760" y2="874.0"/><line x1="457" y1="594.1" x2="760" y2="882.0"/><line x1="457" y1="602.1" x2="760" y2="890.0"/><line x1="457" y1="610.1" x2="760" y2="898.0"/><line x1="457" y1="618.1" x2="760" y2="906.0"/><line x1="457" y1="626.1" x2="760" y2="914.0"/><line x1="457" y1="634.1" x2="760" y2="922.0"/><line x1="457" y1="642.1" x2="760" y2="930.0"/><line x1="457" y1="650.1" x2="760" y2="938.0"/><line x1="457" y1="658.1" x2="760" y2="946.0"/><line x1="457" y1="666.1" x2="760" y2="954.0"/><line x1="457" y1="674.1" x2="760" y2="962.0"/><line x1="457" y1="682.1" x2="760" y2="970.0"/><line x1="457" y1="690.1" x2="760" y2="978.0"/><line x1="457" y1="698.1" x2="760" y2="986.0"/><line x1="457" y1="706.1" x2="760" y2="994.0"/><line x1="457" y1="714.1" x2="760" y2="1002.0"/><line x1="457" y1="722.1" x2="760" y2="1010.0"/><line x1="457" y1="730.1" x2="760" y2="1018.0"/><line x1="457" y1="738.1" x2="760" y2="1026.0"/><line x1="457" y1="746.1" x2="760" y2="1034.0"/><line x1="457" y1="754.1" x2="760" y2="1042.0"/><line x1="457" y1="762.1" x2="760" y2="1050.0"/><line x1="457" y1="770.1" x2="760" y2="1058.0"/><line x1="457" y1="778.1" x2="760" y2="1066.0"/><line x1="457" y1="786.1" x2="760" y2="1074.0"/><line x1="457" y1="794.1" x2="760" y2="1082.0"/><line x1="457" y1="802.1" x2="760" y2="1090.0"/><line x1="457" y1="810.1" x2="760" y2="1098.0"/><line x1="457" y1="818.1" x2="760" y2="1106.0"/><line x1="457" y1="826.1" x2="760" y2="1114.0"/><line x1="457" y1="834.1" x2="760" y2="1122.0"/><line x1="457" y1="842.1" x2="760" y2="1130.0"/><line x1="457" y1="850.1" x2="760" y2="1138.0"/><line x1="457" y1="858.1" x2="760" y2="1146.0"/><line x1="457" y1="866.1" x2="760" y2="1154.0"/><line x1="457" y1="874.1" x2="760" y2="1162.0"/><line x1="457" y1="882.1" x2="760" y2="1170.0"/><line x1="457" y1="890.1" x2="760" y2="1178.0"/><line x1="457" y1="898.1" x2="760" y2="1186.0"/><line x1="457" y1="906.1" x2="760" y2="1194.0"/><line x1="457" y1="914.1" x2="760" y2="1202.0"/><line x1="457" y1="922.1" x2="760" y2="1210.0"/><line x1="457" y1="930.1" x2="760" y2="1218.0"/><line x1="457" y1="938.1" x2="760" y2="1226.0"/><line x1="457" y1="946.1" x2="760" y2="1234.0"/><line x1="457" y1="954.1" x2="760" y2="1242.0"/><line x1="457" y1="962.1" x2="760" y2="1250.0"/><line x1="457" y1="970.1" x2="760" y2="1258.0"/><line x1="457" y1="978.1" x2="760" y2="1266.0"/><line x1="457" y1="986.1" x2="760" y2="1274.0"/><line x1="457" y1="994.1" x2="760" y2="1282.0"/><line x1="457" y1="1002.1" x2="760" y2="1290.0"/><line x1="457" y1="1010.1" x2="760" y2="1298.0"/><line x1="457" y1="1018.1" x2="760" y2="1306.0"/><line x1="457" y1="1026.2" x2="760" y2="1314.0"/><line x1="457" y1="1034.2" x2="760" y2="1322.0"/><line x1="457" y1="1042.2" x2="760" y2="1330.0"/><line x1="457" y1="1050.2" x2="760" y2="1338.0"/><line x1="457" y1="1058.2" x2="760" y2="1346.0"/><line x1="457" y1="1066.2" x2="760" y2="1354.0"/><line x1="457" y1="1074.2" x2="760" y2="1362.0"/><line x1="457" y1="1082.2" x2="760" y2="1370.0"/><line x1="457" y1="1090.2" x2="760" y2="1378.0"/><line x1="457" y1="1098.2" x2="760" y2="1386.0"/><line x1="457" y1="1106.2" x2="760" y2="1394.0"/><line x1="457" y1="1114.2" x2="760" y2="1402.0"/><line x1="457" y1="1122.2" x2="760" y2="1410.0"/><line x1="457" y1="1130.2" x2="760" y2="1418.0"/><line x1="457" y1="1138.2" x2="760" y2="1426.0"/><line x1="457" y1="1146.2" x2="760" y2="1434.0"/><line x1="457" y1="1154.2" x2="760" y2="1442.0"/><line x1="457" y1="1162.2" x2="760" y2="1450.0"/><line x1="457" y1="1170.2" x2="760" y2="1458.0"/><line x1="457" y1="1178.2" x2="760" y2="1466.0"/><line x1="457" y1="1186.2" x2="760" y2="1474.0"/><line x1="457" y1="1194.2" x2="760" y2="1482.0"/><line x1="457" y1="1202.2" x2="760" y2="1490.0"/><line x1="457" y1="1210.2" x2="760" y2="1498.0"/><line x1="457" y1="1218.2" x2="760" y2="1506.0"/><line x1="457" y1="1226.2" x2="760" y2="1514.0"/><line x1="457" y1="1234.2" x2="760" y2="1522.0"/><line x1="457" y1="1242.2" x2="760" y2="1530.0"/><line x1="457" y1="1250.2" x2="760" y2="1538.0"/><line x1="457" y1="1258.2" x2="760" y2="1546.0"/><line x1="457" y1="1266.2" x2="760" y2="1554.0"/><line x1="457" y1="1274.2" x2="760" y2="1562.0"/><line x1="457" y1="1282.2" x2="760" y2="1570.0"/><line x1="457" y1="1290.2" x2="760" y2="1578.0"/><line x1="457" y1="1298.2" x2="760" y2="1586.0"/><line x1="457" y1="1306.2" x2="760" y2="1594.0"/><line x1="457" y1="1314.2" x2="760" y2="1602.0"/><line x1="457" y1="1322.2" x2="760" y2="1610.0"/><line x1="457" y1="1330.2" x2="760" y2="1618.0"/><line x1="457" y1="1338.2" x2="760" y2="1626.0"/><line x1="457" y1="1346.2" x2="760" y2="1634.0"/><line x1="457" y1="1354.2" x2="760" y2="1642.0"/><line x1="457" y1="1362.2" x2="760" y2="1650.0"/><line x1="457" y1="1370.2" x2="760" y2="1658.0"/><line x1="457" y1="1378.2" x2="760" y2="1666.0"/><line x1="457" y1="1386.2" x2="760" y2="1674.0"/><line x1="457" y1="1394.2" x2="760" y2="1682.0"/><line x1="457" y1="1402.2" x2="760" y2="1690.0"/><line x1="457" y1="1410.2" x2="760" y2="1698.0"/><line x1="457" y1="1418.2" x2="760" y2="1706.0"/><line x1="457" y1="1426.2" x2="760" y2="1714.0"/><line x1="457" y1="1434.2" x2="760" y2="1722.0"/><line x1="457" y1="1442.2" x2="760" y2="1730.0"/><line x1="457" y1="1450.2" x2="760" y2="1738.0"/><line x1="457" y1="1458.2" x2="760" y2="1746.0"/><line x1="457" y1="1466.2" x2="760" y2="1754.0"/><line x1="457" y1="1474.2" x2="760" y2="1762.0"/><line x1="457" y1="1482.2" x2="760" y2="1770.0"/><line x1="457" y1="1490.2" x2="760" y2="1778.0"/><line x1="457" y1="1498.2" x2="760" y2="1786.0"/><line x1="457" y1="1506.2" x2="760" y2="1794.0"/><line x1="457" y1="1514.2" x2="760" y2="1802.0"/><line x1="457" y1="1522.2" x2="760" y2="1810.0"/><line x1="457" y1="1530.2" x2="760" y2="1818.0"/><line x1="457" y1="1538.2" x2="760" y2="1826.0"/><line x1="457" y1="1546.2" x2="760" y2="1834.0"/><line x1="457" y1="1554.2" x2="760" y2="1842.0"/><line x1="457" y1="1562.2" x2="760" y2="1850.0"/><line x1="457" y1="1570.2" x2="760" y2="1858.0"/><line x1="457" y1="1578.2" x2="760" y2="1866.0"/><line x1="457" y1="1586.2" x2="760" y2="1874.0"/><line x1="457" y1="1594.2" x2="760" y2="1882.0"/><line x1="457" y1="1602.2" x2="760" y2="1890.0"/><line x1="457" y1="1610.2" x2="760" y2="1898.0"/><line x1="457" y1="728.8" x2="760" y2="350.0"/><line x1="457" y1="738.8" x2="760" y2="360.0"/><line x1="457" y1="748.8" x2="760" y2="370.0"/><line x1="457" y1="758.8" x2="760" y2="380.0"/><line x1="457" y1="768.8" x2="760" y2="390.0"/><line x1="457" y1="778.8" x2="760" y2="400.0"/><line x1="457" y1="788.8" x2="760" y2="410.0"/><line x1="457" y1="798.8" x2="760" y2="420.0"/><line x1="457" y1="808.8" x2="760" y2="430.0"/><line x1="457" y1="818.8" x2="760" y2="440.0"/><line x1="457" y1="828.8" x2="760" y2="450.0"/><line x1="457" y1="838.8" x2="760" y2="460.0"/><line x1="457" y1="848.8" x2="760" y2="470.0"/><line x1="457" y1="858.8" x2="760" y2="480.0"/><line x1="457" y1="868.8" x2="760" y2="490.0"/><line x1="457" y1="878.8" x2="760" y2="500.0"/><line x1="457" y1="888.8" x2="760" y2="510.0"/><line x1="457" y1="898.8" x2="760" y2="520.0"/><line x1="457" y1="908.8" x2="760" y2="530.0"/><line x1="457" y1="918.8" x2="760" y2="540.0"/><line x1="457" y1="928.8" x2="760" y2="550.0"/><line x1="457" y1="938.8" x2="760" y2="560.0"/><line x1="457" y1="948.8" x2="760" y2="570.0"/><line x1="457" y1="958.8" x2="760" y2="580.0"/><line x1="457" y1="968.8" x2="760" y2="590.0"/><line x1="457" y1="978.8" x2="760" y2="600.0"/><line x1="457" y1="988.8" x2="760" y2="610.0"/><line x1="457" y1="998.8" x2="760" y2="620.0"/><line x1="457" y1="1008.8" x2="760" y2="630.0"/><line x1="457" y1="1018.8" x2="760" y2="640.0"/><line x1="457" y1="1028.8" x2="760" y2="650.0"/><line x1="457" y1="1038.8" x2="760" y2="660.0"/><line x1="457" y1="1048.8" x2="760" y2="670.0"/><line x1="457" y1="1058.8" x2="760" y2="680.0"/><line x1="457" y1="1068.8" x2="760" y2="690.0"/><line x1="457" y1="1078.8" x2="760" y2="700.0"/><line x1="457" y1="1088.8" x2="760" y2="710.0"/><line x1="457" y1="1098.8" x2="760" y2="720.0"/><line x1="457" y1="1108.8" x2="760" y2="730.0"/><line x1="457" y1="1118.8" x2="760" y2="740.0"/><line x1="457" y1="1128.8" x2="760" y2="750.0"/><line x1="457" y1="1138.8" x2="760" y2="760.0"/><line x1="457" y1="1148.8" x2="760" y2="770.0"/><line x1="457" y1="1158.8" x2="760" y2="780.0"/><line x1="457" y1="1168.8" x2="760" y2="790.0"/><line x1="457" y1="1178.8" x2="760" y2="800.0"/><line x1="457" y1="1188.8" x2="760" y2="810.0"/><line x1="457" y1="1198.8" x2="760" y2="820.0"/><line x1="457" y1="1208.8" x2="760" y2="830.0"/><line x1="457" y1="1218.8" x2="760" y2="840.0"/><line x1="457" y1="1228.8" x2="760" y2="850.0"/><line x1="457" y1="1238.8" x2="760" y2="860.0"/><line x1="457" y1="1248.8" x2="760" y2="870.0"/><line x1="457" y1="1258.8" x2="760" y2="880.0"/><line x1="457" y1="1268.8" x2="760" y2="890.0"/><line x1="457" y1="1278.8" x2="760" y2="900.0"/><line x1="457" y1="1288.8" x2="760" y2="910.0"/><line x1="457" y1="1298.8" x2="760" y2="920.0"/><line x1="457" y1="1308.8" x2="760" y2="930.0"/><line x1="457" y1="1318.8" x2="760" y2="940.0"/><line x1="457" y1="1328.8" x2="760" y2="950.0"/><line x1="457" y1="1338.8" x2="760" y2="960.0"/><line x1="457" y1="1348.8" x2="760" y2="970.0"/><line x1="457" y1="1358.8" x2="760" y2="980.0"/><line x1="457" y1="1368.8" x2="760" y2="990.0"/><line x1="457" y1="1378.8" x2="760" y2="1000.0"/><line x1="457" y1="1388.8" x2="760" y2="1010.0"/><line x1="457" y1="1398.8" x2="760" y2="1020.0"/><line x1="457" y1="1408.8" x2="760" y2="1030.0"/><line x1="457" y1="1418.8" x2="760" y2="1040.0"/><line x1="457" y1="1428.8" x2="760" y2="1050.0"/><line x1="457" y1="1438.8" x2="760" y2="1060.0"/><line x1="457" y1="1448.8" x2="760" y2="1070.0"/><line x1="457" y1="1458.8" x2="760" y2="1080.0"/><line x1="457" y1="1468.8" x2="760" y2="1090.0"/><line x1="457" y1="1478.8" x2="760" y2="1100.0"/><line x1="457" y1="1488.8" x2="760" y2="1110.0"/><line x1="457" y1="1498.8" x2="760" y2="1120.0"/><line x1="457" y1="1508.8" x2="760" y2="1130.0"/><line x1="457" y1="1518.8" x2="760" y2="1140.0"/><line x1="457" y1="1528.8" x2="760" y2="1150.0"/><line x1="457" y1="1538.8" x2="760" y2="1160.0"/><line x1="457" y1="1548.8" x2="760" y2="1170.0"/><line x1="457" y1="1558.8" x2="760" y2="1180.0"/><line x1="457" y1="1568.8" x2="760" y2="1190.0"/><line x1="457" y1="1578.8" x2="760" y2="1200.0"/><line x1="457" y1="1588.8" x2="760" y2="1210.0"/><line x1="457" y1="1598.8" x2="760" y2="1220.0"/><line x1="457" y1="1608.8" x2="760" y2="1230.0"/><line x1="457" y1="1618.8" x2="760" y2="1240.0"/><line x1="457" y1="1628.8" x2="760" y2="1250.0"/><line x1="457" y1="1638.8" x2="760" y2="1260.0"/><line x1="457" y1="1648.8" x2="760" y2="1270.0"/><line x1="457" y1="1658.8" x2="760" y2="1280.0"/><line x1="457" y1="1668.8" x2="760" y2="1290.0"/><line x1="457" y1="1678.8" x2="760" y2="1300.0"/><line x1="457" y1="1688.8" x2="760" y2="1310.0"/><line x1="457" y1="1698.8" x2="760" y2="1320.0"/><line x1="457" y1="1708.8" x2="760" y2="1330.0"/><line x1="457" y1="1718.8" x2="760" y2="1340.0"/><line x1="457" y1="1728.8" x2="760" y2="1350.0"/><line x1="457" y1="1738.8" x2="760" y2="1360.0"/><line x1="457" y1="1748.8" x2="760" y2="1370.0"/><line x1="457" y1="1758.8" x2="760" y2="1380.0"/><line x1="457" y1="1768.8" x2="760" y2="1390.0"/><line x1="457" y1="1778.8" x2="760" y2="1400.0"/><line x1="457" y1="1788.8" x2="760" y2="1410.0"/><line x1="457" y1="1798.8" x2="760" y2="1420.0"/><line x1="457" y1="1808.8" x2="760" y2="1430.0"/><line x1="457" y1="1818.8" x2="760" y2="1440.0"/></g>
<polyline points="767.9,104.0 769.9,117.0 766.9,129.0 768.9,136.9 763.9,150.9 769.9,158.9 775.9,164.9 778.9,174.9" fill="none" stroke="#4f7f96" stroke-width="1" stroke-opacity="0.8"/>
<polyline points="768.9,136.9 757.9,142.9 747.9,152.9 746.9,164.9" fill="none" stroke="#4f7f96" stroke-width="1" stroke-opacity="0.7"/>
<polyline points="546.9,212.8 648.7,184.9" fill="none" stroke="#405266" stroke-width="1" stroke-opacity="0.72"/>
<polyline points="550.8,238.8 716.6,192.9" fill="none" stroke="#405266" stroke-width="1" stroke-opacity="0.72"/>
<polyline points="556.8,256.8 716.6,216.8" fill="none" stroke="#405266" stroke-width="1" stroke-opacity="0.72"/>
<polyline points="530.9,282.7 584.8,267.7" fill="none" stroke="#405266" stroke-width="1" stroke-opacity="0.72"/>
<polyline points="600.8,196.9 716.6,162.9" fill="none" stroke="#405266" stroke-width="1" stroke-opacity="0.72"/>
<polyline points="457.0,225.0 520.0,208.0" fill="none" stroke="#405266" stroke-width="1" stroke-opacity="0.72"/>
<polyline points="470.0,300.0 530.0,283.0" fill="none" stroke="#405266" stroke-width="1" stroke-opacity="0.72"/>
<polyline points="719.9,105.0 729.8,155.7 739.7,228.5" fill="none" stroke="#405266" stroke-width="1" stroke-opacity="0.72"/>
<polyline points="808.1,109.4 823.5,193.2 841.2,312.4" fill="none" stroke="#405266" stroke-width="1" stroke-opacity="0.72"/>
<polyline points="830.2,127.1 854.4,259.4 863.2,312.4" fill="none" stroke="#405266" stroke-width="1" stroke-opacity="0.72"/>
<polyline points="845.6,105.0 867.7,228.5 883.1,312.4" fill="none" stroke="#405266" stroke-width="1" stroke-opacity="0.72"/>
<polyline points="864.4,105.0 876.5,177.8" fill="none" stroke="#405266" stroke-width="1" stroke-opacity="0.72"/>
<polyline points="917.3,105.0 942.7,197.7 975.8,312.4" fill="none" stroke="#405266" stroke-width="1" stroke-opacity="0.72"/>
<polyline points="949.3,215.3 971.3,312.4" fill="none" stroke="#405266" stroke-width="1" stroke-opacity="0.72"/>
<polyline points="735.3,228.5 744.1,312.4" fill="none" stroke="#405266" stroke-width="1" stroke-opacity="0.72"/>
<polyline points="748.5,197.7 766.2,312.4" fill="none" stroke="#405266" stroke-width="1" stroke-opacity="0.72"/>
<polyline points="766.2,191.0 775.0,228.5 783.8,259.4 797.1,312.4" fill="none" stroke="#405266" stroke-width="1" stroke-opacity="0.72"/>
<polyline points="700.0,166.8 730.9,156.8" fill="none" stroke="#405266" stroke-width="1" stroke-opacity="0.72"/>
<polyline points="724.3,133.7 750.7,124.9" fill="none" stroke="#405266" stroke-width="1" stroke-opacity="0.72"/>
<polyline points="722.1,119.3 751.8,111.6" fill="none" stroke="#405266" stroke-width="1" stroke-opacity="0.72"/>
<polyline points="781.6,169.0 852.2,146.9" fill="none" stroke="#405266" stroke-width="1" stroke-opacity="0.72"/>
<polyline points="839.0,189.9 931.6,160.2" fill="none" stroke="#405266" stroke-width="1" stroke-opacity="0.72"/>
<polyline points="700.0,241.8 834.6,208.7" fill="none" stroke="#405266" stroke-width="1" stroke-opacity="0.72"/>
<polyline points="841.2,228.5 938.3,197.7 1000.0,177.8" fill="none" stroke="#405266" stroke-width="1" stroke-opacity="0.72"/>
<polyline points="841.2,246.2 949.3,215.3" fill="none" stroke="#405266" stroke-width="1" stroke-opacity="0.72"/>
<polyline points="783.8,266.0 872.1,257.2" fill="none" stroke="#405266" stroke-width="1" stroke-opacity="0.72"/>
<polyline points="700.0,272.7 766.2,250.6 841.2,228.5" fill="none" stroke="#405266" stroke-width="1" stroke-opacity="0.72"/>
<polyline points="750.7,296.9 841.2,270.5 960.3,250.6" fill="none" stroke="#405266" stroke-width="1" stroke-opacity="0.72"/>
<polyline points="766.2,308.0 854.4,283.7 942.7,259.4" fill="none" stroke="#405266" stroke-width="1" stroke-opacity="0.72"/>
<polyline points="922.8,123.8 957.0,112.7" fill="none" stroke="#405266" stroke-width="1" stroke-opacity="0.72"/>
<polyline points="940.5,177.8 1000.0,157.9" fill="none" stroke="#405266" stroke-width="1" stroke-opacity="0.72"/>
<polyline points="951.5,220.8 1000.0,206.5" fill="none" stroke="#405266" stroke-width="1" stroke-opacity="0.72"/>
<polyline points="894.1,272.7 898.5,312.4" fill="none" stroke="#405266" stroke-width="1" stroke-opacity="0.72"/>
<polyline points="911.8,268.2 918.4,312.4" fill="none" stroke="#405266" stroke-width="1" stroke-opacity="0.72"/>
<polyline points="974.3,310.0 1023.0,470.0" fill="none" stroke="#405266" stroke-width="1" stroke-opacity="0.72"/>
<polyline points="986.5,337.4 1021.5,440.8" fill="none" stroke="#405266" stroke-width="1" stroke-opacity="0.72"/>
<polyline points="1050.4,310.0 1065.6,370.8 1076.2,413.4" fill="none" stroke="#405266" stroke-width="1" stroke-opacity="0.72"/>
<polyline points="1117.3,310.0 1137.1,386.0 1147.7,416.5" fill="none" stroke="#405266" stroke-width="1" stroke-opacity="0.72"/>
<polyline points="1074.7,383.0 1086.9,431.7" fill="none" stroke="#405266" stroke-width="1" stroke-opacity="0.72"/>
<polyline points="1096.0,367.8 1117.3,446.9" fill="none" stroke="#405266" stroke-width="1" stroke-opacity="0.72"/>
<polyline points="1016.9,376.9 1029.1,410.4 1047.3,470.0" fill="none" stroke="#405266" stroke-width="1" stroke-opacity="0.72"/>
<polyline points="1044.3,401.3 1056.5,470.0" fill="none" stroke="#405266" stroke-width="1" stroke-opacity="0.72"/>
<polyline points="956.1,367.8 1056.5,325.2 1100.6,310.0" fill="none" stroke="#405266" stroke-width="1" stroke-opacity="0.72"/>
<polyline points="1000.2,381.5 1150.0,335.9" fill="none" stroke="#405266" stroke-width="1" stroke-opacity="0.72"/>
<polyline points="1010.8,416.5 1150.0,376.9" fill="none" stroke="#405266" stroke-width="1" stroke-opacity="0.72"/>
<polyline points="989.5,345.0 1103.6,313.0" fill="none" stroke="#405266" stroke-width="1" stroke-opacity="0.72"/>
<polyline points="956.1,462.1 1056.5,436.2" fill="none" stroke="#405266" stroke-width="1" stroke-opacity="0.72"/>
<polyline points="1179.0,1013.0 1179.0,1052.0" fill="none" stroke="#58707c" stroke-width="1" stroke-opacity="0.6"/>
<polyline points="1210.0,1005.0 1210.0,1052.0" fill="none" stroke="#58707c" stroke-width="1" stroke-opacity="0.6"/>
<polyline points="1272.0,990.0 1272.0,1052.0" fill="none" stroke="#58707c" stroke-width="1" stroke-opacity="0.6"/>
<polyline points="1140.0,1038.0 1272.0,1038.0" fill="none" stroke="#58707c" stroke-width="1" stroke-opacity="0.6"/>
<polyline points="1156.0,1028.0 1248.0,1016.0 1265.0,1000.0" fill="none" stroke="#58707c" stroke-width="1" stroke-opacity="0.6"/>
<polyline points="1300.0,980.0 1300.0,1052.0" fill="none" stroke="#58707c" stroke-width="1" stroke-opacity="0.6"/>
<polyline points="1100.0,1046.0 1140.0,1038.0" fill="none" stroke="#58707c" stroke-width="1" stroke-opacity="0.6"/>
<polyline points="1365.0,430.0 1326.8,431.7 1305.7,430.1 1284.6,430.1 1274.1,433.2 1263.5,440.7 1239.4,445.2 1221.3,449.7 1215.3,454.3 1206.3,449.7 1191.2,448.2 1179.1,455.8 1171.6,460.3 1161.0,469.3 1149.0,473.9 1130.9,481.4 1115.8,485.9 1100.7,493.5 1091.7,488.9 1076.6,488.9 1069.1,496.5 1061.5,504.0 1052.5,516.1 1043.5,529.6 1025.4,544.7 1010.3,553.8 998.2,564.3 986.2,577.9 977.1,589.9 965.1,600.5 956.6,608.0" fill="none" stroke="#677e70" stroke-width="3" stroke-opacity="1" stroke-linejoin="round" stroke-linecap="round" />
<polyline points="1066.0,1070.0 1076.0,1053.0 1088.0,1047.0 1094.4,1042.4 1113.0,1034.7 1140.7,1027.0 1162.4,1016.2 1187.0,1010.0 1218.0,1002.3 1248.8,994.6 1279.7,982.2 1301.3,977.6 1323.0,977.6 1353.0,968.0 1365.0,965.0" fill="none" stroke="#6a8273" stroke-width="5" stroke-opacity="1" stroke-linejoin="round" stroke-linecap="round" />
<polygon points="1365.0,430.0 1326.8,431.7 1305.7,430.1 1284.6,430.1 1274.1,433.2 1263.5,440.7 1239.4,445.2 1221.3,449.7 1215.3,454.3 1206.3,449.7 1191.2,448.2 1179.1,455.8 1171.6,460.3 1161.0,469.3 1149.0,473.9 1130.9,481.4 1115.8,485.9 1100.7,493.5 1091.7,488.9 1076.6,488.9 1069.1,496.5 1061.5,504.0 1052.5,516.1 1043.5,529.6 1025.4,544.7 1010.3,553.8 998.2,564.3 986.2,577.9 977.1,589.9 965.1,600.5 956.6,608.0 930.0,640.0 880.0,690.0 820.0,720.0 760.0,760.0 720.0,790.0 692.1,813.5 682.4,823.8 669.8,839.9 656.7,860.6 645.6,874.4 639.2,892.8 630.0,906.6 620.8,920.4 619.6,929.6 607.0,943.4 593.6,954.9 579.8,968.7 571.1,975.6 560.5,987.1 559.6,988.8 568.3,1007.6 576.5,1025.3 587.1,1041.8 593.5,1053.5 594.6,1060.6 1066.0,1070.0 1076.0,1053.0 1088.0,1047.0 1094.4,1042.4 1113.0,1034.7 1140.7,1027.0 1162.4,1016.2 1187.0,1010.0 1218.0,1002.3 1248.8,994.6 1279.7,982.2 1301.3,977.6 1323.0,977.6 1353.0,968.0 1365.0,965.0" fill="#426a75" />
<polygon points="472.3,1031.2 480.5,1025.3 495.8,1021.8 497.6,1015.3 504.1,1017.6 513.5,1013.5 522.9,1006.5 533.5,998.2 541.7,993.5 549.9,990.0 557.0,989.1 562.9,1001.8 568.8,1017.1 574.6,1028.8 581.7,1039.4 579.4,1040.6 574.6,1037.1 567.6,1028.8 564.6,1024.1 557.0,1021.2 542.9,1019.4 541.7,1028.8 532.3,1031.2 518.2,1026.5 512.3,1030.0 504.1,1030.6 498.2,1028.8 492.3,1025.3 484.1,1026.5 474.6,1032.4" fill="#426a75" />
<polygon points="1194.6,104.4 1217.4,104.4 1211.8,114.7 1208.8,129.4 1207.4,144.1 1202.9,158.8 1197.1,173.5 1192.1,183.8 1189.4,189.7 1184.7,188.2 1184.3,182.4 1187.2,170.6 1191.6,158.8 1195.3,136.8 1197.9,122.1 1195.3,114.7" fill="#426a75" />
<polygon points="1246.0,104.4 1299.0,104.4 1292.4,113.2 1285.0,120.6 1276.2,127.9 1268.8,136.8 1262.9,144.1 1254.1,155.9 1248.2,161.8 1242.4,169.1 1236.5,176.5 1230.6,183.8 1226.2,190.4 1221.8,188.2 1224.7,182.4 1230.6,173.5 1236.5,164.7 1244.6,151.5 1247.5,136.8 1248.2,122.1" fill="#426a75" />
<polygon points="1193.1,197.8 1204.1,200.0 1211.8,201.5 1208.5,206.2 1204.1,216.2 1200.4,213.2 1199.4,205.9 1196.0,202.9" fill="#426a75" />
<polygon points="1165.9,176.8 1171.8,175.7 1173.5,180.1 1168.1,181.8" fill="#426a75" />
<polyline points="671.7,103.0 675.7,115.0 678.6,144.9 684.6,184.9 690.6,224.8 701.6,244.8 709.6,264.7 716.6,304.7 719.0,316.7" fill="none" stroke="#465270" stroke-width="3.2" stroke-opacity="1" stroke-linejoin="round" stroke-linecap="round"/>
<polyline points="671.7,103.0 675.7,115.0 678.6,144.9 684.6,184.9 690.6,224.8 701.6,244.8 709.6,264.7 716.6,304.7 719.0,316.7" fill="none" stroke="#5f7086" stroke-width="0.83" stroke-linejoin="round"/>
<polyline points="634.7,103.0 640.7,135.0 648.7,184.9 656.7,224.8 663.7,264.7 660.7,274.7 650.7,282.7 653.7,314.7" fill="none" stroke="#4a5872" stroke-width="2.2" stroke-opacity="1" stroke-linejoin="round" stroke-linecap="round"/>
<polyline points="456.0,162.3 483.0,154.9 534.9,152.9 594.8,115.0 634.7,104.0" fill="none" stroke="#4a5872" stroke-width="2" stroke-opacity="1" stroke-linejoin="round" stroke-linecap="round"/>
<polyline points="564.8,313.7 616.7,296.7 656.7,284.7 716.6,270.7" fill="none" stroke="#4a5872" stroke-width="2" stroke-opacity="1" stroke-linejoin="round" stroke-linecap="round"/>
<polyline points="716.6,270.7 757.9,254.8 839.8,228.8 899.7,208.8 959.6,190.9" fill="none" stroke="#4a5872" stroke-width="1.2" stroke-opacity="1" stroke-linejoin="round" stroke-linecap="round"/>
<polyline points="456.0,261.2 522.9,234.8 542.9,226.8 616.7,204.8 716.6,178.9" fill="none" stroke="#4a5872" stroke-width="1.5" stroke-opacity="1" stroke-linejoin="round" stroke-linecap="round"/>
<polyline points="819.8,103.0 819.8,125.0 827.8,164.9 835.8,180.9 837.8,224.8 847.8,284.7 857.7,313.7" fill="none" stroke="#465270" stroke-width="3.2" stroke-opacity="1" stroke-linejoin="round" stroke-linecap="round"/>
<polyline points="819.8,103.0 819.8,125.0 827.8,164.9 835.8,180.9 837.8,224.8 847.8,284.7 857.7,313.7" fill="none" stroke="#5f7086" stroke-width="0.83" stroke-linejoin="round"/>
<polyline points="901.7,103.0 911.7,164.9 921.6,224.8 931.6,274.7 938.6,316.7" fill="none" stroke="#4a5872" stroke-width="2.6" stroke-opacity="1" stroke-linejoin="round" stroke-linecap="round"/>
<polyline points="1121.5,103.0 1136.7,150.7 1157.0,218.0 1170.5,262.0 1167.0,292.8 1174.0,320.0 1176.0,352.0 1168.0,374.0 1163.0,392.0" fill="none" stroke="#4a5872" stroke-width="2.6" stroke-opacity="1" stroke-linejoin="round" stroke-linecap="round"/>
<polyline points="1157.0,218.0 1174.7,200.0 1186.5,195.6 1214.4,189.7 1226.0,192.6 1246.8,186.8 1268.8,178.0 1270.3,164.7 1282.0,160.3 1302.6,153.7 1342.0,139.0 1353.0,135.0" fill="none" stroke="#4a5872" stroke-width="2.4" stroke-opacity="1" stroke-linejoin="round" stroke-linecap="round"/>
<polyline points="1270.0,178.0 1276.0,180.0 1282.0,194.0 1289.4,213.0 1298.0,230.0 1309.0,252.0 1329.5,316.4 1336.0,345.0 1340.0,380.0 1345.0,420.0" fill="none" stroke="#4a5872" stroke-width="2" stroke-opacity="1" stroke-linejoin="round" stroke-linecap="round"/>
<polyline points="957.5,289.4 1025.0,245.4 1028.5,218.4 1048.8,198.0 1103.0,164.0 1136.7,157.5" fill="none" stroke="#4a5872" stroke-width="1.5" stroke-opacity="1" stroke-linejoin="round" stroke-linecap="round"/>
<polyline points="940.0,205.0 995.0,206.0 1050.0,190.0" fill="none" stroke="#4a5872" stroke-width="1.2" stroke-opacity="1" stroke-linejoin="round" stroke-linecap="round"/>
<polyline points="950.0,427.0 988.0,422.5 1000.0,419.5 1009.0,409.0 1018.4,398.0 1041.0,392.0 1071.7,380.0 1082.3,367.8 1094.5,360.0 1117.0,354.0 1135.5,348.0 1150.0,346.5 1171.6,346.3 1202.5,331.0 1236.5,317.0 1252.0,312.4 1272.0,303.0 1352.0,282.6" fill="none" stroke="#465270" stroke-width="3" stroke-opacity="1" stroke-linejoin="round" stroke-linecap="round"/>
<polyline points="950.0,427.0 988.0,422.5 1000.0,419.5 1009.0,409.0 1018.4,398.0 1041.0,392.0 1071.7,380.0 1082.3,367.8 1094.5,360.0 1117.0,354.0 1135.5,348.0 1150.0,346.5 1171.6,346.3 1202.5,331.0 1236.5,317.0 1252.0,312.4 1272.0,303.0 1352.0,282.6" fill="none" stroke="#5f7086" stroke-width="0.78" stroke-linejoin="round"/>
<polyline points="950.0,436.0 988.0,428.0 1002.0,424.0" fill="none" stroke="#465270" stroke-width="2" stroke-opacity="1" stroke-linejoin="round" stroke-linecap="round"/>
<polyline points="1094.5,364.8 1109.7,367.0 1132.5,358.7 1150.0,354.0 1200.0,340.0" fill="none" stroke="#4a5872" stroke-width="1.6" stroke-opacity="1" stroke-linejoin="round" stroke-linecap="round"/>
<polyline points="1252.0,312.4 1279.7,324.7 1310.6,334.0 1352.0,329.3" fill="none" stroke="#4a5872" stroke-width="1.8" stroke-opacity="1" stroke-linejoin="round" stroke-linecap="round"/>
<polyline points="1140.7,350.0 1147.0,380.3 1156.2,408.0 1162.4,430.0" fill="none" stroke="#465270" stroke-width="2.8" stroke-opacity="1" stroke-linejoin="round" stroke-linecap="round"/>
<polyline points="1140.7,350.0 1147.0,380.3 1156.2,408.0 1162.4,430.0" fill="none" stroke="#5f7086" stroke-width="0.73" stroke-linejoin="round"/>
<polyline points="1310.6,334.0 1320.0,377.0 1329.0,417.4" fill="none" stroke="#465270" stroke-width="2.2" stroke-opacity="1" stroke-linejoin="round" stroke-linecap="round"/>
<polyline points="1353.0,415.8 1326.0,419.0 1295.0,415.8 1273.5,412.7 1248.8,418.9 1218.0,429.7 1187.0,434.3 1162.4,432.8 1137.6,439.0 1113.0,448.2 1088.2,460.6 1069.7,476.0 1048.0,497.7 1031.4,508.5 1010.3,529.6 995.2,550.7 977.0,574.9 950.0,614.0" fill="none" stroke="#465270" stroke-width="3.4" stroke-opacity="1" stroke-linejoin="round" stroke-linecap="round"/>
<polyline points="1353.0,415.8 1326.0,419.0 1295.0,415.8 1273.5,412.7 1248.8,418.9 1218.0,429.7 1187.0,434.3 1162.4,432.8 1137.6,439.0 1113.0,448.2 1088.2,460.6 1069.7,476.0 1048.0,497.7 1031.4,508.5 1010.3,529.6 995.2,550.7 977.0,574.9 950.0,614.0" fill="none" stroke="#5f7086" stroke-width="0.88" stroke-linejoin="round"/>
<polyline points="1353.0,398.0 1300.0,402.0 1250.0,404.0 1200.0,418.0 1150.0,424.0 1100.0,440.0 1075.0,455.0 1050.0,480.0 1020.0,505.0 990.0,540.0 950.0,590.0" fill="none" stroke="#4a5872" stroke-width="1.5" stroke-opacity="1" stroke-linejoin="round" stroke-linecap="round"/>
<polyline points="950.0,436.0 1033.7,440.8 1044.3,428.6 1076.2,413.4 1150.0,398.2 1200.0,386.0 1260.0,376.0 1300.0,372.0" fill="none" stroke="#4a5872" stroke-width="1.2" stroke-opacity="1" stroke-linejoin="round" stroke-linecap="round"/>
<polyline points="670.9,811.2 664.0,823.8 645.6,842.2 618.0,876.7 592.7,906.6 572.0,934.2 549.0,959.5 537.5,968.7" fill="none" stroke="#465270" stroke-width="3.4" stroke-opacity="1" stroke-linejoin="round" stroke-linecap="round"/>
<polyline points="670.9,811.2 664.0,823.8 645.6,842.2 618.0,876.7 592.7,906.6 572.0,934.2 549.0,959.5 537.5,968.7" fill="none" stroke="#5f7086" stroke-width="0.88" stroke-linejoin="round"/>
<polyline points="592.7,811.2 576.6,828.4 569.7,856.0 558.2,872.1 542.1,888.2 537.5,906.6 538.7,948.0 539.8,968.7" fill="none" stroke="#465270" stroke-width="2.8" stroke-opacity="1" stroke-linejoin="round" stroke-linecap="round"/>
<polyline points="592.7,811.2 576.6,828.4 569.7,856.0 558.2,872.1 542.1,888.2 537.5,906.6 538.7,948.0 539.8,968.7" fill="none" stroke="#5f7086" stroke-width="0.73" stroke-linejoin="round"/>
<polyline points="537.5,968.7 549.0,979.1 549.9,985.3 558.2,990.0 566.4,1007.6 574.6,1025.3 585.2,1041.8 591.1,1053.5" fill="none" stroke="#465270" stroke-width="3" stroke-opacity="1" stroke-linejoin="round" stroke-linecap="round"/>
<polyline points="537.5,968.7 549.0,979.1 549.9,985.3 558.2,990.0 566.4,1007.6 574.6,1025.3 585.2,1041.8 591.1,1053.5" fill="none" stroke="#5f7086" stroke-width="0.78" stroke-linejoin="round"/>
<polyline points="537.5,968.7 526.0,981.4 518.2,990.0 507.6,999.4 494.6,1008.8 491.1,1015.9 494.6,1022.9 494.6,1055.9" fill="none" stroke="#465270" stroke-width="2.8" stroke-opacity="1" stroke-linejoin="round" stroke-linecap="round"/>
<polyline points="537.5,968.7 526.0,981.4 518.2,990.0 507.6,999.4 494.6,1008.8 491.1,1015.9 494.6,1022.9 494.6,1055.9" fill="none" stroke="#5f7086" stroke-width="0.73" stroke-linejoin="round"/>
<polyline points="456.4,1001.2 468.8,997.1 475.8,992.9 492.3,1007.6" fill="none" stroke="#465270" stroke-width="2.4" stroke-opacity="1" stroke-linejoin="round" stroke-linecap="round"/>
<polyline points="455.8,969.9 470.8,987.1 475.8,992.9" fill="none" stroke="#4a5872" stroke-width="2" stroke-opacity="1" stroke-linejoin="round" stroke-linecap="round"/>
<polyline points="498.2,1037.1 515.8,1031.2 539.4,1037.1 557.0,1042.9 574.6,1045.3 585.2,1041.8" fill="none" stroke="#4a5872" stroke-width="1.5" stroke-opacity="1" stroke-linejoin="round" stroke-linecap="round"/>
<polyline points="693.9,813.5 675.5,835.3 657.1,856.0 643.3,879.0 638.7,897.4 622.6,918.1 618.0,929.6 595.0,952.6 565.1,984.8" fill="none" stroke="#4a5872" stroke-width="1.4" stroke-opacity="1" stroke-linejoin="round" stroke-linecap="round"/>
<polyline points="631.8,811.2 585.8,851.4 560.5,885.9 537.5,906.6" fill="none" stroke="#4a5872" stroke-width="1.4" stroke-opacity="1" stroke-linejoin="round" stroke-linecap="round"/>
<polyline points="657.1,811.2 654.8,823.8 645.6,842.2" fill="none" stroke="#4a5872" stroke-width="1.6" stroke-opacity="1" stroke-linejoin="round" stroke-linecap="round"/>
<polyline points="1100.0,1052.0 1108.0,1044.0 1122.0,1041.0 1143.8,1030.0 1187.0,1013.0 1248.8,996.0 1279.7,982.2 1304.4,977.6 1353.0,973.0" fill="none" stroke="#465270" stroke-width="2" stroke-opacity="1" stroke-linejoin="round" stroke-linecap="round"/>
<polyline points="1118.0,1052.0 1122.0,1044.0 1135.0,1040.0 1150.0,1052.0" fill="none" stroke="#4a5872" stroke-width="1.5" stroke-opacity="1" stroke-linejoin="round" stroke-linecap="round"/>
<text x="468" y="109.5" font-size="12" font-weight="normal" fill="#1c1c1c" text-anchor="middle" letter-spacing="0" stroke="#7a8780" stroke-width="2.6" stroke-opacity=".85" stroke-linejoin="round" paint-order="stroke">erett</text>
<text x="498" y="254" font-size="12" font-weight="normal" fill="#1c1c1c" text-anchor="middle" letter-spacing="0" stroke="#7a8780" stroke-width="2.6" stroke-opacity=".85" stroke-linejoin="round" paint-order="stroke">Loretto</text>
<text x="528" y="276" font-size="12" font-weight="normal" fill="#1c1c1c" text-anchor="middle" letter-spacing="0" stroke="#7a8780" stroke-width="2.6" stroke-opacity=".85" stroke-linejoin="round" paint-order="stroke">Colgan</text>
<text x="647.5" y="302" font-size="12" font-weight="normal" fill="#1c1c1c" text-anchor="middle" letter-spacing="0" stroke="#7a8780" stroke-width="2.6" stroke-opacity=".85" stroke-linejoin="round" paint-order="stroke">Schomberg</text>
<text x="727.5" y="297" font-size="12" font-weight="normal" fill="#1c1c1c" text-anchor="middle" letter-spacing="0" stroke="#7a8780" stroke-width="2.6" stroke-opacity=".85" stroke-linejoin="round" paint-order="stroke">Kettleby</text>
<text x="736" y="180" font-size="12" font-weight="normal" fill="#1c1c1c" text-anchor="middle" letter-spacing="0" stroke="#7a8780" stroke-width="2.6" stroke-opacity=".85" stroke-linejoin="round" paint-order="stroke">Bradford West</text>
<text x="736" y="192" font-size="12" font-weight="normal" fill="#1c1c1c" text-anchor="middle" letter-spacing="0" stroke="#7a8780" stroke-width="2.6" stroke-opacity=".85" stroke-linejoin="round" paint-order="stroke">Gwillimbury</text>
<text x="752" y="222" font-size="12" font-weight="normal" fill="#1c1c1c" text-anchor="middle" letter-spacing="0" stroke="#7a8780" stroke-width="2.6" stroke-opacity=".85" stroke-linejoin="round" paint-order="stroke">Ansnorveldt</text>
<text x="824" y="194" font-size="12" font-weight="normal" fill="#1c1c1c" text-anchor="middle" letter-spacing="0" stroke="#7a8780" stroke-width="2.6" stroke-opacity=".85" stroke-linejoin="round" paint-order="stroke">East</text>
<text x="823" y="206" font-size="12" font-weight="normal" fill="#1c1c1c" text-anchor="middle" letter-spacing="0" stroke="#7a8780" stroke-width="2.6" stroke-opacity=".85" stroke-linejoin="round" paint-order="stroke">Gwillimbury</text>
<text x="809" y="243" font-size="12" font-weight="normal" fill="#1c1c1c" text-anchor="middle" letter-spacing="0" stroke="#7a8780" stroke-width="2.6" stroke-opacity=".85" stroke-linejoin="round" paint-order="stroke">Newmarket</text>
<text x="817" y="296" font-size="12" font-weight="normal" fill="#1c1c1c" text-anchor="middle" letter-spacing="0" stroke="#7a8780" stroke-width="2.6" stroke-opacity=".85" stroke-linejoin="round" paint-order="stroke">Aurora</text>
<text x="806" y="108" font-size="12" font-weight="normal" fill="#1c1c1c" text-anchor="middle" letter-spacing="0" stroke="#7a8780" stroke-width="2.6" stroke-opacity=".85" stroke-linejoin="round" paint-order="stroke">Beveney Isles</text>
<text x="926" y="265" font-size="12" font-weight="normal" fill="#1c1c1c" text-anchor="middle" letter-spacing="0" stroke="#7a8780" stroke-width="2.6" stroke-opacity=".85" stroke-linejoin="round" paint-order="stroke">Ballantrae</text>
<text x="1001" y="266" font-size="12" font-weight="normal" fill="#1c1c1c" text-anchor="middle" letter-spacing="0" stroke="#7a8780" stroke-width="2.6" stroke-opacity=".85" stroke-linejoin="round" paint-order="stroke">Goodwood</text>
<text x="953" y="299" font-size="12" font-weight="normal" fill="#1c1c1c" text-anchor="middle" letter-spacing="0" stroke="#7a8780" stroke-width="2.6" stroke-opacity=".85" stroke-linejoin="round" paint-order="stroke">Bloomington</text>
<text x="1058" y="192" font-size="12" font-weight="normal" fill="#1c1c1c" text-anchor="middle" letter-spacing="0" stroke="#7a8780" stroke-width="2.6" stroke-opacity=".85" stroke-linejoin="round" paint-order="stroke">Uxbridge</text>
<text x="1133" y="149" font-size="12" font-weight="normal" fill="#1c1c1c" text-anchor="middle" letter-spacing="0" stroke="#7a8780" stroke-width="2.6" stroke-opacity=".85" stroke-linejoin="round" paint-order="stroke">Greenbank</text>
<text x="1221" y="130" font-size="12" font-weight="normal" fill="#1c1c1c" text-anchor="middle" letter-spacing="0" stroke="#7a8780" stroke-width="2.6" stroke-opacity=".85" stroke-linejoin="round" paint-order="stroke">Scugog</text>
<text x="1185" y="196" font-size="12" font-weight="normal" fill="#1c1c1c" text-anchor="middle" letter-spacing="0" stroke="#7a8780" stroke-width="2.6" stroke-opacity=".85" stroke-linejoin="round" paint-order="stroke">Port Perry</text>
<text x="1275" y="192" font-size="12" font-weight="normal" fill="#1c1c1c" text-anchor="middle" letter-spacing="0" stroke="#7a8780" stroke-width="2.6" stroke-opacity=".85" stroke-linejoin="round" paint-order="stroke">Blackstock</text>
<text x="1294" y="240" font-size="12" font-weight="normal" fill="#1c1c1c" text-anchor="middle" letter-spacing="0" stroke="#7a8780" stroke-width="2.6" stroke-opacity=".85" stroke-linejoin="round" paint-order="stroke">Burketon</text>
<text x="1294" y="252" font-size="12" font-weight="normal" fill="#1c1c1c" text-anchor="middle" letter-spacing="0" stroke="#7a8780" stroke-width="2.6" stroke-opacity=".85" stroke-linejoin="round" paint-order="stroke">Station</text>
<text x="1312" y="287" font-size="12" font-weight="normal" fill="#1c1c1c" text-anchor="middle" letter-spacing="0" stroke="#7a8780" stroke-width="2.6" stroke-opacity=".85" stroke-linejoin="round" paint-order="stroke">Enniskillen</text>
<text x="1287" y="348" font-size="12" font-weight="normal" fill="#1c1c1c" text-anchor="middle" letter-spacing="0" stroke="#7a8780" stroke-width="2.6" stroke-opacity=".85" stroke-linejoin="round" paint-order="stroke">Mitchell</text>
<text x="1287" y="360" font-size="12" font-weight="normal" fill="#1c1c1c" text-anchor="middle" letter-spacing="0" stroke="#7a8780" stroke-width="2.6" stroke-opacity=".85" stroke-linejoin="round" paint-order="stroke">Corners</text>
<text x="1007" y="404" font-size="12" font-weight="normal" fill="#1c1c1c" text-anchor="middle" letter-spacing="0" stroke="#7a8780" stroke-width="2.6" stroke-opacity=".85" stroke-linejoin="round" paint-order="stroke">Green River</text>
<text x="1188" y="404" font-size="12" font-weight="normal" fill="#1c1c1c" text-anchor="middle" letter-spacing="0" stroke="#7a8780" stroke-width="2.6" stroke-opacity=".85" stroke-linejoin="round" paint-order="stroke">Whitby</text>
<text x="1300" y="393" font-size="12" font-weight="normal" fill="#1c1c1c" text-anchor="middle" letter-spacing="0" stroke="#7a8780" stroke-width="2.6" stroke-opacity=".85" stroke-linejoin="round" paint-order="stroke">Courtice</text>
<text x="1130" y="454" font-size="12" font-weight="normal" fill="#1c1c1c" text-anchor="middle" letter-spacing="0" stroke="#7a8780" stroke-width="2.6" stroke-opacity=".85" stroke-linejoin="round" paint-order="stroke">Ajax</text>
<text x="1081" y="466" font-size="12" font-weight="normal" fill="#1c1c1c" text-anchor="middle" letter-spacing="0" stroke="#7a8780" stroke-width="2.6" stroke-opacity=".85" stroke-linejoin="round" paint-order="stroke">Pickering</text>
<text x="509" y="924" font-size="12" font-weight="normal" fill="#1c1c1c" text-anchor="middle" letter-spacing="0" stroke="#7a8780" stroke-width="2.6" stroke-opacity=".85" stroke-linejoin="round" paint-order="stroke">Highview</text>
<text x="509" y="937" font-size="12" font-weight="normal" fill="#1c1c1c" text-anchor="middle" letter-spacing="0" stroke="#7a8780" stroke-width="2.6" stroke-opacity=".85" stroke-linejoin="round" paint-order="stroke">Survey</text>
<text x="1271" y="997" font-size="12" font-weight="normal" fill="#1c1c1c" text-anchor="middle" letter-spacing="0" stroke="#7a8780" stroke-width="2.6" stroke-opacity=".85" stroke-linejoin="round" paint-order="stroke">Wilson</text>
<text x="1267" y="148" font-size="12" font-weight="normal" fill="#1c1c1c" text-anchor="start" letter-spacing="0" stroke="#7a8780" stroke-width="2.6" stroke-opacity=".85" stroke-linejoin="round" paint-order="stroke">Nestleton</text>
<text x="956" y="332" font-size="12" font-weight="normal" fill="#1c1c1c" text-anchor="start" letter-spacing="0" stroke="#7a8780" stroke-width="2.6" stroke-opacity=".85" stroke-linejoin="round" paint-order="stroke">ch-Stouffville</text>
<text x="1305" y="332" font-size="12" font-weight="normal" fill="#1c1c1c" text-anchor="start" letter-spacing="0" stroke="#7a8780" stroke-width="2.6" stroke-opacity=".85" stroke-linejoin="round" paint-order="stroke">Hampton</text>
<text x="1337" y="391" font-size="12" font-weight="normal" fill="#1c1c1c" text-anchor="start" letter-spacing="0" stroke="#7a8780" stroke-width="2.6" stroke-opacity=".85" stroke-linejoin="round" paint-order="stroke">Bowmanville</text>
<text x="1341" y="970" font-size="12" font-weight="normal" fill="#1c1c1c" text-anchor="start" letter-spacing="0" stroke="#7a8780" stroke-width="2.6" stroke-opacity=".85" stroke-linejoin="round" paint-order="stroke">Olcott</text>
<text x="1343" y="992" font-size="12" font-weight="normal" fill="#1c1c1c" text-anchor="start" letter-spacing="0" stroke="#7a8780" stroke-width="2.6" stroke-opacity=".85" stroke-linejoin="round" paint-order="stroke">Burt</text>
<text x="1332" y="1020" font-size="12" font-weight="normal" fill="#1c1c1c" text-anchor="start" letter-spacing="0" stroke="#7a8780" stroke-width="2.6" stroke-opacity=".85" stroke-linejoin="round" paint-order="stroke">Newfane</text>
<text x="1088" y="1053" font-size="12" font-weight="normal" fill="#1c1c1c" text-anchor="middle" letter-spacing="0" stroke="#7a8780" stroke-width="2.6" stroke-opacity=".85" stroke-linejoin="round" paint-order="stroke">Niagara-on-the-Lake</text>
<text x="1019" y="477.5" font-size="14" font-weight="normal" fill="#134a36" text-anchor="middle" letter-spacing="0" stroke="#6a8474" stroke-width="2.6" stroke-opacity=".85" stroke-linejoin="round" paint-order="stroke">Rouge</text>
<text x="1019" y="491.5" font-size="14" font-weight="normal" fill="#134a36" text-anchor="middle" letter-spacing="0" stroke="#6a8474" stroke-width="2.6" stroke-opacity=".85" stroke-linejoin="round" paint-order="stroke">National</text>
<text x="1019" y="505.5" font-size="14" font-weight="normal" fill="#134a36" text-anchor="middle" letter-spacing="0" stroke="#6a8474" stroke-width="2.6" stroke-opacity=".85" stroke-linejoin="round" paint-order="stroke">Urban Park</text>
<text x="1244" y="407" font-size="15.5" fill="none" text-anchor="middle" letter-spacing="0.1" stroke="#7a8780" stroke-width="3.2" stroke-opacity=".85" stroke-linejoin="round">Oshawa</text>
<text x="1244" y="407" font-size="15.5" fill="#141414" text-anchor="middle" letter-spacing="0.1" stroke="#141414" stroke-width=".55">Oshawa</text>
<text x="645" y="840.5" font-size="15.5" fill="none" text-anchor="middle" letter-spacing="0.1" stroke="#7a8780" stroke-width="3.2" stroke-opacity=".85" stroke-linejoin="round">Oakville</text>
<text x="645" y="840.5" font-size="15.5" fill="#141414" text-anchor="middle" letter-spacing="0.1" stroke="#141414" stroke-width=".55">Oakville</text>
<text x="563" y="983" font-size="15.5" fill="none" text-anchor="middle" letter-spacing="0.1" stroke="#7a8780" stroke-width="3.2" stroke-opacity=".85" stroke-linejoin="round">Burlington</text>
<text x="563" y="983" font-size="15.5" fill="#141414" text-anchor="middle" letter-spacing="0.1" stroke="#141414" stroke-width=".55">Burlington</text>
<text x="551.5" y="1054" font-size="19" fill="none" text-anchor="end" letter-spacing="0.1" stroke="#7a8780" stroke-width="3.2" stroke-opacity=".85" stroke-linejoin="round">Hamilton</text>
<text x="551.5" y="1054" font-size="19" fill="#141414" text-anchor="end" letter-spacing="0.1" stroke="#141414" stroke-width=".55">Hamilton</text>
<path d="M528.25,97.5 L542.75,97.5 Q543.75,97.5 543.55,98.5 L541.95,110.0 Q541.55,111.5 540.25,111.5 L530.75,111.5 Q529.45,111.5 529.05,110.0 L527.45,98.5 Q527.25,97.5 528.25,97.5 Z" fill="#7f7f7f" stroke="#303030" stroke-width="1.1" stroke-linejoin="round"/>
<text x="535.5" y="107.8" font-size="9.5" fill="#222" text-anchor="middle" letter-spacing="-.2">10</text>
<path d="M454.75,122.5 L469.25,122.5 Q470.25,122.5 470.05,123.5 L468.45,135.0 Q468.05,136.5 466.75,136.5 L457.25,136.5 Q455.95,136.5 455.55,135.0 L453.95,123.5 Q453.75,122.5 454.75,122.5 Z" fill="#7f7f7f" stroke="#303030" stroke-width="1.1" stroke-linejoin="round"/>
<text x="462" y="132.8" font-size="9.5" fill="#222" text-anchor="middle" letter-spacing="-.2">13</text>
<path d="M615.5,197.0 L626.5,197.0 Q627.5,197.0 627.3,198.0 L625.7,209.5 Q625.3,211.0 624.0,211.0 L618.0,211.0 Q616.7,211.0 616.3,209.5 L614.7,198.0 Q614.5,197.0 615.5,197.0 Z" fill="#7f7f7f" stroke="#303030" stroke-width="1.1" stroke-linejoin="round"/>
<text x="621" y="207.3" font-size="9.5" fill="#222" text-anchor="middle" letter-spacing="-.2">1</text>
<path d="M537.5,221.0 L548.5,221.0 Q549.5,221.0 549.3,222.0 L547.7,233.5 Q547.3,235.0 546.0,235.0 L540.0,235.0 Q538.7,235.0 538.3,233.5 L536.7,222.0 Q536.5,221.0 537.5,221.0 Z" fill="#7f7f7f" stroke="#303030" stroke-width="1.1" stroke-linejoin="round"/>
<text x="543" y="231.3" font-size="9.5" fill="#222" text-anchor="middle" letter-spacing="-.2">1</text>
<path d="M498.75,293.0 L513.25,293.0 Q514.25,293.0 514.05,294.0 L512.45,305.5 Q512.05,307.0 510.75,307.0 L501.25,307.0 Q499.95,307.0 499.55,305.5 L497.95,294.0 Q497.75,293.0 498.75,293.0 Z" fill="#7f7f7f" stroke="#303030" stroke-width="1.1" stroke-linejoin="round"/>
<text x="506" y="303.3" font-size="9.5" fill="#222" text-anchor="middle" letter-spacing="-.2">50</text>
<path d="M696.5,246.0 Q705,243.8 713.5,246.0 L715.0,248.0 L714.0,255.5 Q705,261.5 696.0,255.5 L695.0,248.0 Z" fill="#7f7f7f" stroke="#303030" stroke-width="1.1" stroke-linejoin="round"/>
<text x="705" y="255.3" font-size="9.5" fill="#222" text-anchor="middle" letter-spacing="-.2">400</text>
<path d="M751.75,247.0 L766.25,247.0 Q767.25,247.0 767.05,248.0 L765.45,259.5 Q765.05,261.0 763.75,261.0 L754.25,261.0 Q752.95,261.0 752.55,259.5 L750.95,248.0 Q750.75,247.0 751.75,247.0 Z" fill="#7f7f7f" stroke="#303030" stroke-width="1.1" stroke-linejoin="round"/>
<text x="759" y="257.3" font-size="9.5" fill="#222" text-anchor="middle" letter-spacing="-.2">31</text>
<path d="M822.5,113.0 L833.5,113.0 Q834.5,113.0 834.3,114.0 L832.7,125.5 Q832.3,127.0 831.0,127.0 L825.0,127.0 Q823.7,127.0 823.3,125.5 L821.7,114.0 Q821.5,113.0 822.5,113.0 Z" fill="#7f7f7f" stroke="#303030" stroke-width="1.1" stroke-linejoin="round"/>
<text x="828" y="123.3" font-size="9.5" fill="#222" text-anchor="middle" letter-spacing="-.2">8</text>
<path d="M931.75,111.0 L946.25,111.0 Q947.25,111.0 947.05,112.0 L945.45,123.5 Q945.05,125.0 943.75,125.0 L934.25,125.0 Q932.95,125.0 932.55,123.5 L930.95,112.0 Q930.75,111.0 931.75,111.0 Z" fill="#7f7f7f" stroke="#303030" stroke-width="1.1" stroke-linejoin="round"/>
<text x="939" y="121.3" font-size="9.5" fill="#222" text-anchor="middle" letter-spacing="-.2">39</text>
<path d="M937.75,196.0 L952.25,196.0 Q953.25,196.0 953.05,197.0 L951.45,208.5 Q951.05,210.0 949.75,210.0 L940.25,210.0 Q938.95,210.0 938.55,208.5 L936.95,197.0 Q936.75,196.0 937.75,196.0 Z" fill="#7f7f7f" stroke="#303030" stroke-width="1.1" stroke-linejoin="round"/>
<text x="945" y="206.3" font-size="9.5" fill="#222" text-anchor="middle" letter-spacing="-.2">30</text>
<path d="M989.5,199.0 L1000.5,199.0 Q1001.5,199.0 1001.3,200.0 L999.7,211.5 Q999.3,213.0 998.0,213.0 L992.0,213.0 Q990.7,213.0 990.3,211.5 L988.7,200.0 Q988.5,199.0 989.5,199.0 Z" fill="#7f7f7f" stroke="#303030" stroke-width="1.1" stroke-linejoin="round"/>
<text x="995" y="209.3" font-size="9.5" fill="#222" text-anchor="middle" letter-spacing="-.2">8</text>
<path d="M1101.75,158.0 L1116.25,158.0 Q1117.25,158.0 1117.05,159.0 L1115.45,170.5 Q1115.05,172.0 1113.75,172.0 L1104.25,172.0 Q1102.95,172.0 1102.55,170.5 L1100.95,159.0 Q1100.75,158.0 1101.75,158.0 Z" fill="#7f7f7f" stroke="#303030" stroke-width="1.1" stroke-linejoin="round"/>
<text x="1109" y="168.3" font-size="9.5" fill="#222" text-anchor="middle" letter-spacing="-.2">47</text>
<path d="M1019.75,237.0 L1034.25,237.0 Q1035.25,237.0 1035.05,238.0 L1033.45,249.5 Q1033.05,251.0 1031.75,251.0 L1022.25,251.0 Q1020.95,251.0 1020.55,249.5 L1018.95,238.0 Q1018.75,237.0 1019.75,237.0 Z" fill="#7f7f7f" stroke="#303030" stroke-width="1.1" stroke-linejoin="round"/>
<text x="1027" y="247.3" font-size="9.5" fill="#222" text-anchor="middle" letter-spacing="-.2">47</text>
<path d="M1186.5,218.0 L1197.5,218.0 Q1198.5,218.0 1198.3,219.0 L1196.7,230.5 Q1196.3,232.0 1195.0,232.0 L1189.0,232.0 Q1187.7,232.0 1187.3,230.5 L1185.7,219.0 Q1185.5,218.0 1186.5,218.0 Z" fill="#7f7f7f" stroke="#303030" stroke-width="1.1" stroke-linejoin="round"/>
<text x="1192" y="228.3" font-size="9.5" fill="#222" text-anchor="middle" letter-spacing="-.2">2</text>
<path d="M1280.75,152.0 Q1288,149.8 1295.25,152.0 L1296.75,154.0 L1295.75,161.5 Q1288,167.5 1280.25,161.5 L1279.25,154.0 Z" fill="#7f7f7f" stroke="#303030" stroke-width="1.1" stroke-linejoin="round"/>
<text x="1288" y="161.3" font-size="9.5" fill="#222" text-anchor="middle" letter-spacing="-.2">7A</text>
<path d="M1277.75,198.0 L1292.25,198.0 Q1293.25,198.0 1293.05,199.0 L1291.45,210.5 Q1291.05,212.0 1289.75,212.0 L1280.25,212.0 Q1278.95,212.0 1278.55,210.5 L1276.95,199.0 Q1276.75,198.0 1277.75,198.0 Z" fill="#7f7f7f" stroke="#303030" stroke-width="1.1" stroke-linejoin="round"/>
<text x="1285" y="208.3" font-size="9.5" fill="#222" text-anchor="middle" letter-spacing="-.2">57</text>
<path d="M1333.75,248.0 L1348.25,248.0 Q1349.25,248.0 1349.05,249.0 L1347.45,260.5 Q1347.05,262.0 1345.75,262.0 L1336.25,262.0 Q1334.95,262.0 1334.55,260.5 L1332.95,249.0 Q1332.75,248.0 1333.75,248.0 Z" fill="#7f7f7f" stroke="#303030" stroke-width="1.1" stroke-linejoin="round"/>
<text x="1341" y="258.3" font-size="9.5" fill="#222" text-anchor="middle" letter-spacing="-.2">20</text>
<path d="M1166.75,297.0 Q1174,294.8 1181.25,297.0 L1182.75,299.0 L1181.75,306.5 Q1174,312.5 1166.25,306.5 L1165.25,299.0 Z" fill="#7f7f7f" stroke="#303030" stroke-width="1.1" stroke-linejoin="round"/>
<text x="1174" y="306.3" font-size="9.5" fill="#222" text-anchor="middle" letter-spacing="-.2">12</text>
<path d="M1234.5,311.0 Q1243,308.8 1251.5,311.0 L1253.0,313.0 L1252.0,320.5 Q1243,326.5 1234.0,320.5 L1233.0,313.0 Z" fill="#7f7f7f" stroke="#303030" stroke-width="1.1" stroke-linejoin="round"/>
<text x="1243" y="320.3" font-size="9.5" fill="#222" text-anchor="middle" letter-spacing="-.2">407</text>
<path d="M1116.75,327.0 L1131.25,327.0 Q1132.25,327.0 1132.05,328.0 L1130.45,339.5 Q1130.05,341.0 1128.75,341.0 L1119.25,341.0 Q1117.95,341.0 1117.55,339.5 L1115.95,328.0 Q1115.75,327.0 1116.75,327.0 Z" fill="#7f7f7f" stroke="#303030" stroke-width="1.1" stroke-linejoin="round"/>
<text x="1124" y="337.3" font-size="9.5" fill="#222" text-anchor="middle" letter-spacing="-.2">23</text>
<path d="M1137.5,384.0 Q1146,381.8 1154.5,384.0 L1156.0,386.0 L1155.0,393.5 Q1146,399.5 1137.0,393.5 L1136.0,386.0 Z" fill="#7f7f7f" stroke="#303030" stroke-width="1.1" stroke-linejoin="round"/>
<text x="1146" y="393.3" font-size="9.5" fill="#222" text-anchor="middle" letter-spacing="-.2">412</text>
<path d="M1339.75,338.0 L1354.25,338.0 Q1355.25,338.0 1355.05,339.0 L1353.45,350.5 Q1353.05,352.0 1351.75,352.0 L1342.25,352.0 Q1340.95,352.0 1340.55,350.5 L1338.95,339.0 Q1338.75,338.0 1339.75,338.0 Z" fill="#7f7f7f" stroke="#303030" stroke-width="1.1" stroke-linejoin="round"/>
<text x="1347" y="348.3" font-size="9.5" fill="#222" text-anchor="middle" letter-spacing="-.2">57</text>
<path d="M968.5,422.0 Q977,419.8 985.5,422.0 L987.0,424.0 L986.0,431.5 Q977,437.5 968.0,431.5 L967.0,424.0 Z" fill="#7f7f7f" stroke="#303030" stroke-width="1.1" stroke-linejoin="round"/>
<text x="977" y="431.3" font-size="9.5" fill="#222" text-anchor="middle" letter-spacing="-.2">407</text>
<path d="M1076.5,417.0 L1087.5,417.0 Q1088.5,417.0 1088.3,418.0 L1086.7,429.5 Q1086.3,431.0 1085.0,431.0 L1079.0,431.0 Q1077.7,431.0 1077.3,429.5 L1075.7,418.0 Q1075.5,417.0 1076.5,417.0 Z" fill="#7f7f7f" stroke="#303030" stroke-width="1.1" stroke-linejoin="round"/>
<text x="1082" y="427.3" font-size="9.5" fill="#222" text-anchor="middle" letter-spacing="-.2">1</text>
<path d="M1148.5,431.0 Q1157,428.8 1165.5,431.0 L1167.0,433.0 L1166.0,440.5 Q1157,446.5 1148.0,440.5 L1147.0,433.0 Z" fill="#7f7f7f" stroke="#303030" stroke-width="1.1" stroke-linejoin="round"/>
<text x="1157" y="440.3" font-size="9.5" fill="#222" text-anchor="middle" letter-spacing="-.2">401</text>
<path d="M537.75,818.0 L552.25,818.0 Q553.25,818.0 553.05,819.0 L551.45,830.5 Q551.05,832.0 549.75,832.0 L540.25,832.0 Q538.95,832.0 538.55,830.5 L536.95,819.0 Q536.75,818.0 537.75,818.0 Z" fill="#7f7f7f" stroke="#303030" stroke-width="1.1" stroke-linejoin="round"/>
<text x="545" y="828.3" font-size="9.5" fill="#222" text-anchor="middle" letter-spacing="-.2">25</text>
<path d="M615.5,808.0 L626.5,808.0 Q627.5,808.0 627.3,809.0 L625.7,820.5 Q625.3,822.0 624.0,822.0 L618.0,822.0 Q616.7,822.0 616.3,820.5 L614.7,809.0 Q614.5,808.0 615.5,808.0 Z" fill="#7f7f7f" stroke="#303030" stroke-width="1.1" stroke-linejoin="round"/>
<text x="621" y="818.3" font-size="9.5" fill="#222" text-anchor="middle" letter-spacing="-.2">3</text>
<path d="M676.75,807.0 L691.25,807.0 Q692.25,807.0 692.05,808.0 L690.45,819.5 Q690.05,821.0 688.75,821.0 L679.25,821.0 Q677.95,821.0 677.55,819.5 L675.95,808.0 Q675.75,807.0 676.75,807.0 Z" fill="#7f7f7f" stroke="#303030" stroke-width="1.1" stroke-linejoin="round"/>
<text x="684" y="817.3" font-size="9.5" fill="#222" text-anchor="middle" letter-spacing="-.2">19</text>
<path d="M584.5,846.0 L595.5,846.0 Q596.5,846.0 596.3,847.0 L594.7,858.5 Q594.3,860.0 593.0,860.0 L587.0,860.0 Q585.7,860.0 585.3,858.5 L583.7,847.0 Q583.5,846.0 584.5,846.0 Z" fill="#7f7f7f" stroke="#303030" stroke-width="1.1" stroke-linejoin="round"/>
<text x="590" y="856.3" font-size="9.5" fill="#222" text-anchor="middle" letter-spacing="-.2">5</text>
<path d="M547.0,872.5 Q555.5,870.3 564.0,872.5 L565.5,874.5 L564.5,882.0 Q555.5,888.0 546.5,882.0 L545.5,874.5 Z" fill="#7f7f7f" stroke="#303030" stroke-width="1.1" stroke-linejoin="round"/>
<text x="555.5" y="881.8" font-size="9.5" fill="#222" text-anchor="middle" letter-spacing="-.2">407</text>
<path d="M593.5,891.0 Q602,888.8 610.5,891.0 L612.0,893.0 L611.0,900.5 Q602,906.5 593.0,900.5 L592.0,893.0 Z" fill="#7f7f7f" stroke="#303030" stroke-width="1.1" stroke-linejoin="round"/>
<text x="602" y="900.3" font-size="9.5" fill="#222" text-anchor="middle" letter-spacing="-.2">403</text>
<path d="M561.75,902.0 L576.25,902.0 Q577.25,902.0 577.05,903.0 L575.45,914.5 Q575.05,916.0 573.75,916.0 L564.25,916.0 Q562.95,916.0 562.55,914.5 L560.95,903.0 Q560.75,902.0 561.75,902.0 Z" fill="#7f7f7f" stroke="#303030" stroke-width="1.1" stroke-linejoin="round"/>
<text x="569" y="912.3" font-size="9.5" fill="#222" text-anchor="middle" letter-spacing="-.2">20</text>
<path d="M465.5,980.0 Q471,977.8 476.5,980.0 L478.0,982.0 L477.0,989.5 Q471,995.5 465.0,989.5 L464.0,982.0 Z" fill="#7f7f7f" stroke="#303030" stroke-width="1.1" stroke-linejoin="round"/>
<text x="471" y="989.3" font-size="9.5" fill="#222" text-anchor="middle" letter-spacing="-.2">6</text>
<path d="M449.5,827.0 L460.5,827.0 Q461.5,827.0 461.3,828.0 L459.7,839.5 Q459.3,841.0 458.0,841.0 L452.0,841.0 Q450.7,841.0 450.3,839.5 L448.7,828.0 Q448.5,827.0 449.5,827.0 Z" fill="#7f7f7f" stroke="#303030" stroke-width="1.1" stroke-linejoin="round"/>
<text x="455" y="837.3" font-size="9.5" fill="#222" text-anchor="middle" letter-spacing="-.2">7</text>
<path d="M581.5,111.5 L592.5,111.5 Q593.5,111.5 593.3,112.5 L591.7,124.0 Q591.3,125.5 590.0,125.5 L584.0,125.5 Q582.7,125.5 582.3,124.0 L580.7,112.5 Q580.5,111.5 581.5,111.5 Z" fill="#7f7f7f" stroke="#303030" stroke-width="1.1" stroke-linejoin="round"/>
<text x="587" y="121.8" font-size="9.5" fill="#222" text-anchor="middle" letter-spacing="-.2">9</text>
<polyline points="1353,679 999,852 1096,1042 1100,1046" fill="none" stroke="#0a0a0a" stroke-width="1.15" stroke-linejoin="miter"/>
</svg><div class="gc" style="left:10px;top:10px;width:68px;height:40px;border-radius:2px 0 0 2px;font-weight:bold;color:#000;font-size:18px;line-height:42px;text-align:center;letter-spacing:-.2px">Map</div>
<div class="gc" style="left:78px;top:10px;width:100px;height:40px;border-radius:0 2px 2px 0;border-left:1px solid #797979;color:#303030;font-size:18px;line-height:42px;text-align:center;letter-spacing:-.1px">Satellite</div>
<div class="gc" style="left:845px;top:10px;width:40px;height:40px;border-radius:2px"><svg width="18" height="18" viewBox="0 0 18 18" style="position:absolute;left:11px;top:11px"><path d="M0 0h6v2.500H2.500V6H0zM12 0h6v6h-2.500V2.500H12zM0 12h2.500v3.500H6V18H0zM15.500 12H18v6h-6v-2.500h3.500z" fill="#2e2e2e"/></svg></div>
<div class="gc" style="left:845px;top:779px;width:40px;height:40px;border-radius:2px"><svg width="22" height="32" viewBox="0 0 22 32" style="position:absolute;left:9.500px;top:4.500px;transform:scale(.94,.97)"><path d="M6.500 12.200h9c1.300 0 2.200.9 2.500 2.100l1.700 7.200c.2.800-.9 1.300-1.300.5l-2.200-4.500-.4 12.300c0 .9-1.200 1.100-1.500.2L13.500 30h-1.600V21.500h-1.800V30H8.500l-.800 0c-.3.900-1.500.7-1.500-.2L5.800 17.500l-2.200 4.500c-.4.800-1.500.3-1.300-.5L4 14.300c.3-1.200 1.200-2.100 2.500-2.100z" fill="#8c6818" stroke="#5e4612" stroke-width=".7"/><circle cx="11" cy="6.400" r="5.300" fill="#8a681a" stroke="#62490f" stroke-width=".6"/><path d="M7.200 12.300L11 17l3.800-4.700z" fill="#8e4a1c"/></svg></div>
<div class="gc" style="left:845px;top:851px;width:40px;height:81px;border-radius:2px"><div style="position:absolute;left:5px;top:40px;width:30px;height:1px;background:#737373"></div><svg width="18" height="18" viewBox="0 0 18 18" style="position:absolute;left:11px;top:11px"><path d="M7.250 0h3.500v7.250H18v3.500h-7.250V18h-3.500v-7.250H0v-3.500h7.250z" fill="#333"/></svg><svg width="18" height="18" viewBox="0 0 18 18" style="position:absolute;left:11px;top:52px"><path d="M0 7.250h18v3.500H0z" fill="#333"/></svg></div>
<div id="glogo" style="color:#7c7f7e"><span>G</span><span>o</span><span>o</span><span>g</span><span>l</span><span>e</span></div>
<div id="glogo2"><span style="color:#20407e">G</span><span style="color:#782019">o</span><span style="color:#7f6003">o</span><span style="color:#20407e">g</span><span style="color:#1a562b">l</span><span style="color:#782019">e</span></div>
<div id="attr"><span>Keyboard shortcuts</span><span>Map data ©2024 Google</span><span>Terms</span><span>Report a map error</span></div>
<!--/MAP--></div>
<div id="modal">
  <div id="mtitle">Booking</div>
  <div id="mh">Reservations</div>
  <div id="sel"><span>Parking Space 2</span><svg width="12" height="8" viewBox="0 0 12 8"><path d="M1.500 1.500L6 6l4.500-4.500" fill="none" stroke="#111" stroke-width="2" stroke-linecap="round" stroke-linejoin="round"/></svg></div>
  <div class="inp" style="top:169px"><span>Select start date</span></div>
  <div class="inp" style="top:206px"><span>Select end date</span></div>
  <div id="addbtn">Add Reservation</div>
  <div id="tip">Please fill out this field.</div>
  <div id="tbl">
    <div style="top:0px" class="tr th"><span class="c1">ID</span><span class="c2">User ID</span><span class="c3">Parking Space ID</span><span class="c4">Start Time</span><span class="c5">End Time</span></div>
    <div style="top:24px" class="tr"><span class="c1">1</span><span class="c2">1</span><span class="c3">1</span><span class="c4">08/22/2024 8:00 AM</span><span class="c5">08/22/2024 12:00 PM</span></div>
    <div style="top:48px" class="tr"><span class="c1">6</span><span class="c2">1</span><span class="c3">8</span><span class="c4">09/11/2024 12:00 AM</span><span class="c5">09/12/2024 12:00 AM</span></div>
    <div style="top:72px" class="tr"><span class="c1">7</span><span class="c2">1</span><span class="c3">8</span><span class="c4">09/11/2024 12:00 AM</span><span class="c5">09/12/2024 12:00 AM</span></div>
    <div style="top:96px" class="tr"><span class="c1">8</span><span class="c2">1</span><span class="c3">5</span><span class="c4">09/18/2024 8:30 PM</span><span class="c5">09/23/2024 9:00 PM</span></div>
    <div style="top:120px" class="tr"><span class="c1">10</span><span class="c2">1</span><span class="c3">7</span><span class="c4">09/13/2024 1:00 PM</span><span class="c5">09/24/2024 12:00 AM</span></div>
    <div style="top:144px" class="tr"><span class="c1">9</span><span class="c2">1</span><span class="c3">7</span><span class="c4">09/13/2024 1:00 PM</span><span class="c5">09/24/2024 12:00 AM</span></div>
    <div style="top:168px" class="tr"><span class="c1">11</span><span class="c2">1</span><span class="c3">1</span><span class="c4">10/15/2024 12:00 AM</span><span class="c5">10/26/2024 12:00 AM</span></div>
    <div style="top:192px" class="tr"><span class="c1">12</span><span class="c2">1</span><span class="c3">7</span><span class="c4">09/12/2024 12:00 AM</span><span class="c5">09/13/2024 12:00 AM</span></div>
    <div style="top:216px" class="tr"><span class="c1">13</span><span class="c2">1</span><span class="c3">7</span><span class="c4">09/14/2024 12:00 AM</span><span class="c5">09/15/2024 12:00 AM</span></div>
  </div>
  <div id="msb"></div><div id="msbt"></div>
</div>
</div>
</body>
</html>
